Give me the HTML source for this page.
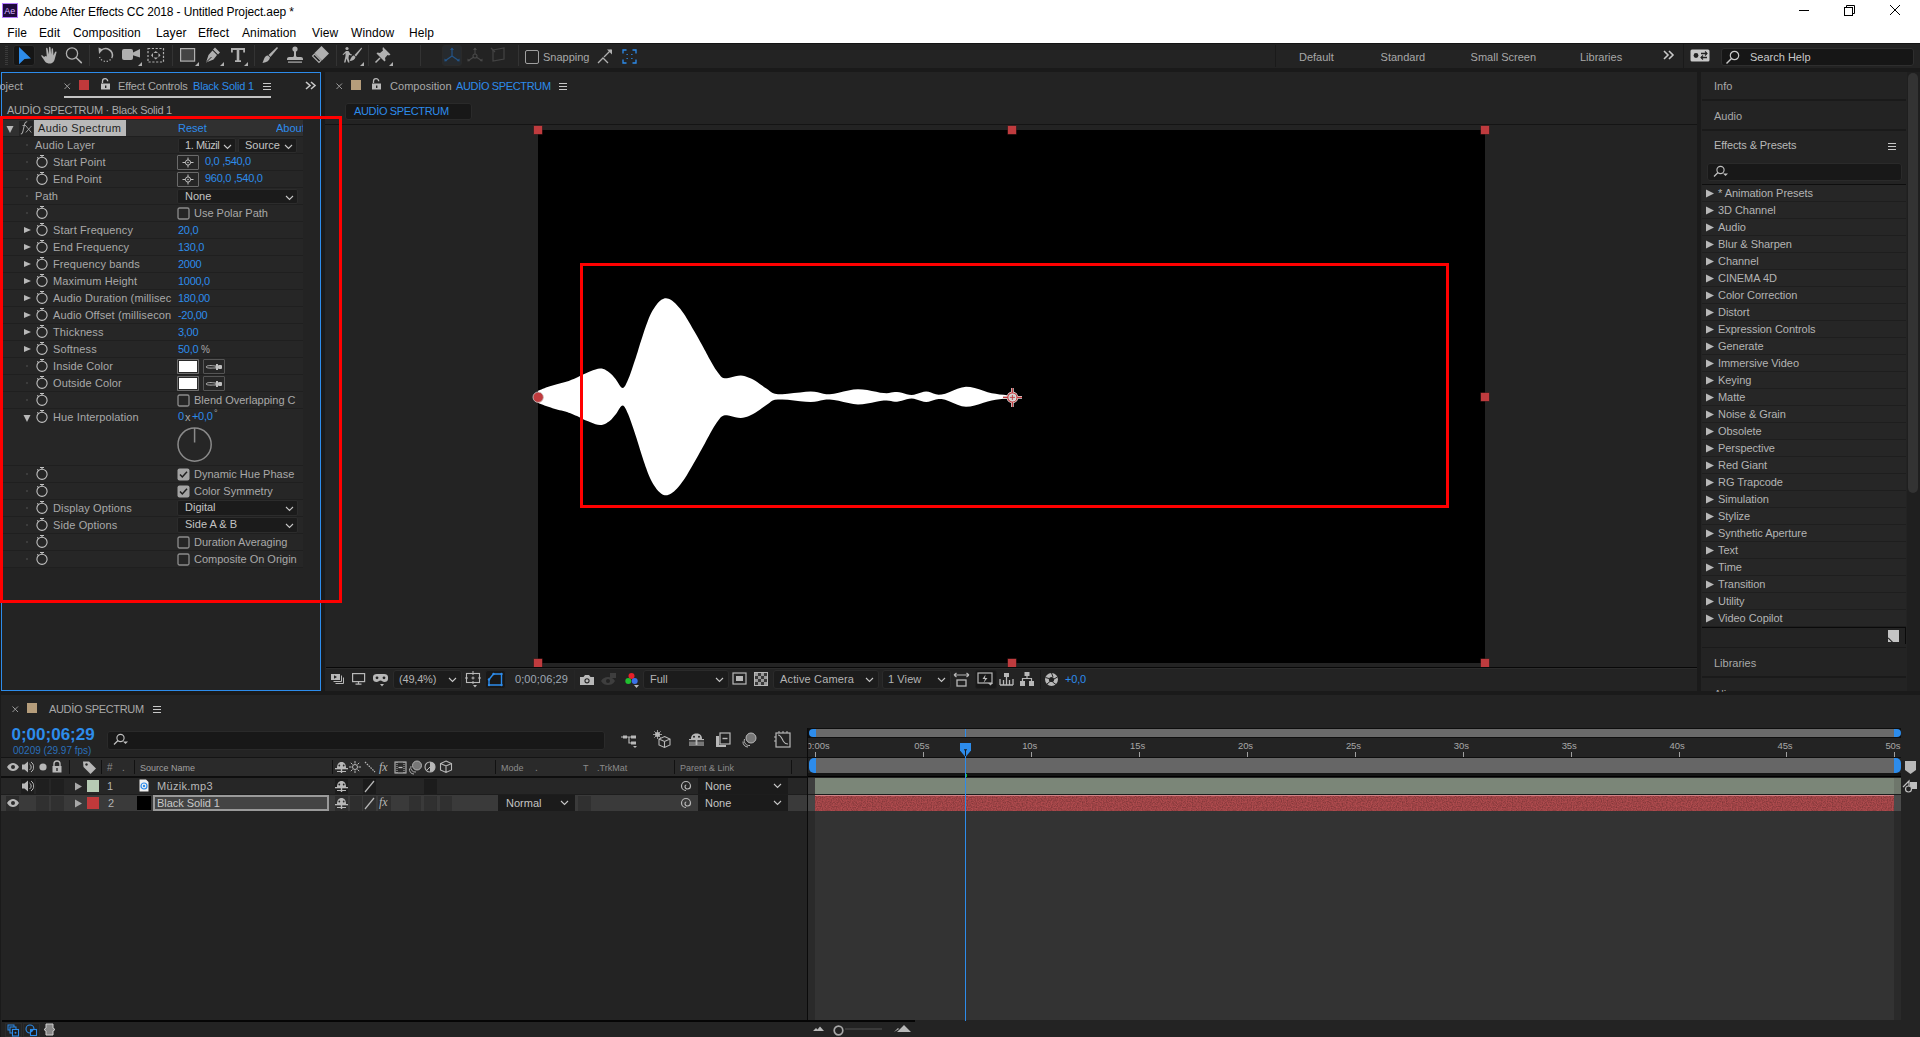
<!DOCTYPE html><html><head><meta charset="utf-8"><style>
*{margin:0;padding:0}
html,body{width:1920px;height:1037px;overflow:hidden;background:#1a1a1a;font-family:"Liberation Sans",sans-serif}
.t{position:absolute;white-space:pre;line-height:1em}
.r{position:absolute;display:block}
</style></head><body><div class="r" style="left:0px;top:0px;width:1920px;height:43px;background:#ffffff;"></div>
<div class="r" style="left:0px;top:43px;width:1920px;height:1px;background:#141414;"></div>
<div class="r" style="left:0px;top:44px;width:1920px;height:24px;background:#232323;"></div>
<div class="r" style="left:2px;top:3px;width:16px;height:15px;box-sizing:border-box;border:1px solid #b47cff;background:#1f0a3d;"></div>
<div class="t" style="left:4.2px;top:6.58px;font-size:9px;color:#d9b0ff;">Ae</div>
<div class="t" style="left:23.4px;top:6.14px;font-size:12px;color:#000000;letter-spacing:-0.12px;">Adobe After Effects CC 2018 - Untitled Project.aep *</div>
<div class="r" style="left:1799px;top:10px;width:10px;height:1px;background:#000;"></div>
<svg class="r" style="left:1843px;top:4px;" width="13" height="13" viewBox="0 0 13 13"><rect x="1.5" y="3.5" width="8" height="8" fill="none" stroke="#000"/><path d="M3.5 3.5V1.5H11.5V9.5H9.5" fill="none" stroke="#000"/></svg>
<svg class="r" style="left:1889px;top:4px;" width="13" height="13" viewBox="0 0 13 13"><path d="M1 1L11 11M11 1L1 11" stroke="#000" stroke-width="1"/></svg>
<div class="t" style="left:7.3px;top:26.54px;font-size:12px;color:#000000;letter-spacing:0.1px;">File</div>
<div class="t" style="left:39px;top:26.54px;font-size:12px;color:#000000;letter-spacing:0.1px;">Edit</div>
<div class="t" style="left:73px;top:26.54px;font-size:12px;color:#000000;letter-spacing:0.1px;">Composition</div>
<div class="t" style="left:156px;top:26.54px;font-size:12px;color:#000000;letter-spacing:0.1px;">Layer</div>
<div class="t" style="left:198px;top:26.54px;font-size:12px;color:#000000;letter-spacing:0.1px;">Effect</div>
<div class="t" style="left:242px;top:26.54px;font-size:12px;color:#000000;letter-spacing:0.1px;">Animation</div>
<div class="t" style="left:312px;top:26.54px;font-size:12px;color:#000000;letter-spacing:0.1px;">View</div>
<div class="t" style="left:351px;top:26.54px;font-size:12px;color:#000000;letter-spacing:0.1px;">Window</div>
<div class="t" style="left:409px;top:26.54px;font-size:12px;color:#000000;letter-spacing:0.1px;">Help</div>
<svg class="r" style="left:5px;top:46px;" width="3" height="20" viewBox="0 0 3 20"><rect x="0" y="0" width="3" height="1" fill="#3a3a3a"/><rect x="0" y="2" width="3" height="1" fill="#3a3a3a"/><rect x="0" y="4" width="3" height="1" fill="#3a3a3a"/><rect x="0" y="6" width="3" height="1" fill="#3a3a3a"/><rect x="0" y="8" width="3" height="1" fill="#3a3a3a"/><rect x="0" y="10" width="3" height="1" fill="#3a3a3a"/><rect x="0" y="12" width="3" height="1" fill="#3a3a3a"/><rect x="0" y="14" width="3" height="1" fill="#3a3a3a"/><rect x="0" y="16" width="3" height="1" fill="#3a3a3a"/><rect x="0" y="18" width="3" height="1" fill="#3a3a3a"/></svg>
<div class="r" style="left:13px;top:45px;width:22px;height:21px;box-sizing:border-box;border:1px solid #2a2a2a;background:#151515;border-radius:3px;"></div>
<svg class="r" style="left:17px;top:45px;" width="16" height="20" viewBox="0 0 16 20"><path d="M2 2L14 13.6L7.5 14L2 19.2Z" fill="#2d8ceb"/></svg>
<svg class="r" style="left:40px;top:46px;" width="18" height="18" viewBox="0 0 18 18"><path d="M4 11C3 9.5 1.5 8.8 1.2 9.6C1 10.3 3.5 13 5 15.5C6 17 8 17.5 10 17.5C13 17.5 14.5 15 15 12L16.5 6.5C16.8 5.5 15.6 5 15 6L13.5 9.5L13 3C13 2 11.7 2 11.6 3L11.2 8.5L10.5 1.5C10.4 0.5 9 0.5 9 1.5L8.8 8.5L7.5 2.5C7.3 1.5 6 1.7 6.1 2.7L6.8 10.5L5.5 10Z" fill="#b0b0b0"/></svg>
<svg class="r" style="left:64px;top:46px;" width="20" height="20" viewBox="0 0 20 20"><circle cx="8" cy="7.5" r="5.6" fill="none" stroke="#b0b0b0" stroke-width="1.3"/><path d="M12 11.5L17.3 16.6" stroke="#b0b0b0" stroke-width="1.6" stroke-linecap="round"/></svg>
<div class="r" style="left:89px;top:45px;width:1px;height:21px;background:#333333;"></div>
<svg class="r" style="left:97px;top:46px;" width="18" height="18" viewBox="0 0 18 18"><path d="M15.2 11A6.8 6.8 0 0 1 2.5 11" fill="none" stroke="#b0b0b0" stroke-width="1.3" stroke-dasharray="1.3 1.7"/><path d="M4.5 4A6.8 6.8 0 0 1 15.2 11" fill="none" stroke="#b0b0b0" stroke-width="1.5"/><path d="M1.5 1.5L6 3.5L2 8Z" fill="#b0b0b0"/></svg>
<svg class="r" style="left:121px;top:48px;" width="20" height="18" viewBox="0 0 20 18"><rect x="1" y="1" width="11" height="11" rx="2" fill="#b0b0b0"/><path d="M11 5L19 1V9.5L11 7Z" fill="#b0b0b0"/></svg>
<svg class="r" style="left:138px;top:62px;" width="4" height="4" viewBox="0 0 4 4"><path d="M4 0V4H0Z" fill="#b0b0b0"/></svg>
<svg class="r" style="left:147px;top:47px;" width="18" height="17" viewBox="0 0 18 17"><rect x="1" y="1.5" width="15.5" height="13.5" fill="none" stroke="#b0b0b0" stroke-width="1.2" stroke-dasharray="2.2 1.6"/><path d="M8.75 4L11 6H6.5Z M8.75 12.5L11 10.5H6.5Z M4 8.25L6 6V10.5Z M13.5 8.25L11.5 6V10.5Z" fill="#b0b0b0"/></svg>
<div class="r" style="left:172px;top:45px;width:1px;height:21px;background:#333333;"></div>
<svg class="r" style="left:179px;top:47px;" width="18" height="16" viewBox="0 0 18 16"><rect x="1.6" y="1.6" width="14" height="12.5" fill="#444444" stroke="#b0b0b0" stroke-width="1.2"/></svg>
<svg class="r" style="left:195px;top:62px;" width="4" height="4" viewBox="0 0 4 4"><path d="M4 0V4H0Z" fill="#b0b0b0"/></svg>
<svg class="r" style="left:204px;top:46px;" width="18" height="18" viewBox="0 0 18 18"><path d="M11 1.5L16 6.5L14 8.5L9 3.5Z M8.5 4.5L13 9L9.5 13.5L2 16.5L4.5 9Z" fill="#b0b0b0"/><path d="M2.5 16L7.5 11" stroke="#232323" stroke-width="1"/></svg>
<svg class="r" style="left:220px;top:62px;" width="4" height="4" viewBox="0 0 4 4"><path d="M4 0V4H0Z" fill="#b0b0b0"/></svg>
<svg class="r" style="left:230px;top:47px;" width="16" height="16" viewBox="0 0 16 16"><path d="M1 1H15V5.5H13.2V3H9.3V13.2H11V15H5V13.2H6.7V3H2.8V5.5H1Z" fill="#b0b0b0"/></svg>
<svg class="r" style="left:244px;top:62px;" width="4" height="4" viewBox="0 0 4 4"><path d="M4 0V4H0Z" fill="#b0b0b0"/></svg>
<div class="r" style="left:254px;top:45px;width:1px;height:21px;background:#333333;"></div>
<svg class="r" style="left:261px;top:46px;" width="18" height="18" viewBox="0 0 18 18"><path d="M16 1L17 2L9.5 11L7.5 9Z" fill="#b0b0b0"/><path d="M7 9.5L9 11.5C8.5 14.5 6 16.5 1.5 17C2.5 15 3 12 4.5 10.5C5.3 9.7 6.3 9.3 7 9.5Z" fill="#b0b0b0"/></svg>
<svg class="r" style="left:286px;top:46px;" width="18" height="18" viewBox="0 0 18 18"><circle cx="9" cy="3" r="2.6" fill="#b0b0b0"/><path d="M8 5H10V9.5C10 10.5 11 11 12 11H15C16 11 17 11.8 17 13V14H1V13C1 11.8 2 11 3 11H6C7 11 8 10.5 8 9.5Z" fill="#b0b0b0"/><rect x="2" y="15.5" width="14" height="1.2" fill="#b0b0b0"/></svg>
<svg class="r" style="left:311px;top:45px;" width="19" height="19" viewBox="0 0 19 19"><path d="M10.5 1L18 8.5L11 15.5L3.5 8Z" fill="#b0b0b0"/><path d="M3.5 9L10 15.5L8 17.5L1.5 11Z" fill="none" stroke="#b0b0b0" stroke-width="1.1"/></svg>
<div class="r" style="left:336px;top:45px;width:1px;height:21px;background:#333333;"></div>
<svg class="r" style="left:341px;top:46px;" width="22" height="18" viewBox="0 0 22 18"><circle cx="6" cy="2.5" r="1.6" fill="#b0b0b0"/><path d="M5 5H7.5L9.5 8L11 8.5L10.5 9.5L8 9L7.5 12L8.5 16.5H7L5.5 12.5L4.5 16.5H3L4.5 10V7L2.5 9L1.5 8.5Z" fill="#b0b0b0"/><path d="M20.5 1.5L21 2.5L15 10.5L13.5 9Z" fill="#b0b0b0"/><path d="M13 9.5L14.5 11C14 13.5 11.5 15 8.5 15C9.5 13.5 10 11.5 11 10.5C11.5 10 12.3 9.5 13 9.5Z" fill="#b0b0b0"/></svg>
<svg class="r" style="left:360px;top:62px;" width="4" height="4" viewBox="0 0 4 4"><path d="M4 0V4H0Z" fill="#b0b0b0"/></svg>
<div class="r" style="left:368px;top:45px;width:1px;height:21px;background:#333333;"></div>
<svg class="r" style="left:374px;top:46px;" width="18" height="18" viewBox="0 0 18 18"><path d="M9 1L16.5 8.5L15 9.5L13.5 9L11 12L11.5 14.5L10.5 15.5L2.5 7.5L3.5 6.5L6 7L9 4.5L8.5 3Z" fill="#b0b0b0"/><path d="M6 12L1.5 16.5" stroke="#b0b0b0" stroke-width="1.6"/></svg>
<svg class="r" style="left:389px;top:62px;" width="4" height="4" viewBox="0 0 4 4"><path d="M4 0V4H0Z" fill="#b0b0b0"/></svg>
<div class="r" style="left:420px;top:45px;width:1px;height:21px;background:#333333;"></div>
<div class="r" style="left:442px;top:45px;width:20px;height:21px;box-sizing:border-box;border:1px solid #2a2a2a;background:#262a2e;border-radius:3px;"></div>
<svg class="r" style="left:443px;top:46px;" width="18" height="18" viewBox="0 0 18 18"><path d="M9 2V10M9 10L2.5 14.5M9 10L15.5 14.5" stroke="#235487" stroke-width="1.2" fill="none"/><path d="M7 4L9 1.5L11 4Z M1.5 12.5L1.5 15.5L4.5 15Z M16.5 12.5L16.5 15.5L13.5 15Z" fill="#235487"/></svg>
<svg class="r" style="left:466px;top:46px;" width="18" height="18" viewBox="0 0 18 18"><path d="M9 2V8.5M7.8 11L2.5 14.5M10.2 11L15.5 14.5" stroke="#484848" stroke-width="1.1" fill="none"/><circle cx="9" cy="10" r="2" fill="none" stroke="#484848" stroke-width="1.1"/><path d="M7 4L9 1.5L11 4Z M1.5 12.5L1.5 15.5L4.5 15Z M16.5 12.5L16.5 15.5L13.5 15Z" fill="#484848"/></svg>
<svg class="r" style="left:490px;top:46px;" width="18" height="18" viewBox="0 0 18 18"><path d="M3 4L14 2V13L3 15Z" stroke="#444" stroke-width="1.2" fill="none"/><path d="M1 2L5 6" stroke="#444" stroke-width="1.2"/></svg>
<div class="r" style="left:518px;top:45px;width:1px;height:21px;background:#333333;"></div>
<div class="r" style="left:525px;top:50px;width:14px;height:14px;box-sizing:border-box;border:1.3px solid #a0a0a0;background:transparent;border-radius:2px;"></div>
<div class="t" style="left:543px;top:51.69px;font-size:11px;color:#a8a8a8;">Snapping</div>
<svg class="r" style="left:597px;top:48px;" width="17" height="16" viewBox="0 0 17 16"><path d="M1 15L6 10L11 15" stroke="#b0b0b0" stroke-width="1.3" fill="none"/><path d="M7 9L14 2" stroke="#b0b0b0" stroke-width="1.3"/><path d="M10 1.5H15V6.5Z" fill="#b0b0b0"/></svg>
<svg class="r" style="left:622px;top:49px;" width="15" height="15" viewBox="0 0 15 15"><path d="M1 4.5V1H4.5M10.5 1H14V4.5M14 10.5V14H10.5M4.5 14H1V10.5" stroke="#2d8ceb" stroke-width="1.3" fill="none"/><path d="M4.5 5.5H5.8M9.2 5.5H10.5M4.5 9.5H5.8M9.2 9.5H10.5" stroke="#2d8ceb" stroke-width="1.1"/></svg>
<div class="r" style="left:1275px;top:45px;width:1px;height:22px;background:#1a1a1a;"></div>
<div class="t" style="left:1299px;top:51.69px;font-size:11px;color:#a8a8a8;">Default</div>
<div class="t" style="left:1380.6px;top:51.69px;font-size:11px;color:#a8a8a8;">Standard</div>
<div class="t" style="left:1470.6px;top:51.69px;font-size:11px;color:#a8a8a8;">Small Screen</div>
<div class="t" style="left:1580px;top:51.69px;font-size:11px;color:#a8a8a8;">Libraries</div>
<svg class="r" style="left:1662px;top:49px;" width="13" height="12" viewBox="0 0 13 12"><path d="M2 2L6 6L2 10M7 2L11 6L7 10" stroke="#c8c8c8" stroke-width="1.6" fill="none"/></svg>
<div class="r" style="left:1683px;top:44px;width:1px;height:24px;background:#1a1a1a;"></div>
<svg class="r" style="left:1690px;top:49px;" width="20" height="13" viewBox="0 0 20 13"><rect x="0.5" y="0.5" width="19" height="12" rx="1.5" fill="#c8c8c8"/><circle cx="6" cy="6.5" r="2.4" fill="#232323"/><path d="M11 4.5H17M11 8.5H17" stroke="#232323" stroke-width="1.3"/><path d="M15 2.5L17 4.5L15 6.5M13 6.5L11 8.5L13 10.5" stroke="#232323" stroke-width="1.1" fill="none"/></svg>
<div class="r" style="left:1721px;top:48px;width:193px;height:18px;box-sizing:border-box;border:1px solid #2e2e2e;background:#161616;border-radius:3px;"></div>
<svg class="r" style="left:1725px;top:50px;" width="16" height="15" viewBox="0 0 16 15"><circle cx="9.5" cy="5.5" r="4.2" fill="none" stroke="#c8c8c8" stroke-width="1.2"/><path d="M6.5 8.5L1.5 13.5" stroke="#c8c8c8" stroke-width="1.4"/></svg>
<div class="t" style="left:1750px;top:52.19px;font-size:11px;color:#c8c8c8;">Search Help</div>
<div class="r" style="left:0px;top:68px;width:1920px;height:4px;background:#1a1a1a;"></div>
<div class="r" style="left:1px;top:73px;width:319px;height:617px;background:#232323;"></div>
<div class="r" style="left:1px;top:72px;width:320px;height:619px;box-sizing:border-box;border:1px solid #2d8ceb;background:transparent;"></div>
<div class="t" style="left:-0.5px;top:80.69px;font-size:11px;color:#a9a9a9;">oject</div>
<svg class="r" style="left:63px;top:82px;" width="9" height="9" viewBox="0 0 9 9"><path d="M1.5 1.5L7 7M7 1.5L1.5 7" stroke="#9a9a9a" stroke-width="1"/></svg>
<div class="r" style="left:79px;top:80px;width:10px;height:10px;background:#c0393b;"></div>
<svg class="r" style="left:100px;top:78px;" width="11" height="12" viewBox="0 0 11 12"><path d="M2.5 5V3.3A2.6 2.6 0 0 1 7.7 3.3" stroke="#c0c0c0" stroke-width="1.3" fill="none"/><rect x="1" y="5.5" width="9" height="6" fill="#c0c0c0"/><rect x="5" y="7.5" width="1.4" height="2.5" fill="#232323"/></svg>
<div class="t" style="left:118px;top:80.69px;font-size:11px;color:#a9a9a9;letter-spacing:-0.15px;">Effect Controls</div>
<div class="t" style="left:193px;top:80.69px;font-size:11px;color:#2d8ceb;letter-spacing:-0.2px;">Black Solid 1</div>
<svg class="r" style="left:262px;top:82px;" width="10" height="9" viewBox="0 0 10 9"><path d="M1 1.5H9M1 4.5H9M1 7.5H9" stroke="#c8c8c8" stroke-width="1.2"/></svg>
<svg class="r" style="left:304px;top:80px;" width="13" height="11" viewBox="0 0 13 11"><path d="M2 2L6 5.5L2 9M7 2L11 5.5L7 9" stroke="#c8c8c8" stroke-width="1.6" fill="none"/></svg>
<div class="r" style="left:64px;top:96px;width:207px;height:2px;background:#c4c4c4;"></div>
<div class="t" style="left:7px;top:105.09px;font-size:11px;color:#a9a9a9;letter-spacing:-0.27px;">AUDİO SPECTRUM · Black Solid 1</div>
<div class="r" style="left:1px;top:120px;width:302px;height:16px;background:#303030;"></div>
<svg class="r" style="left:6px;top:125px;" width="8" height="9" viewBox="0 0 8 9"><path d="M0.5 1H7.5L4 8Z" fill="#b8b8b8"/></svg>
<div class="r" style="left:19px;top:121px;width:14px;height:15px;background:#242424;"></div>
<svg class="r" style="left:19px;top:120px;" width="15" height="16" viewBox="0 0 15 16"><path d="M1.8 14C3 14 3.6 13 4 11L5.6 4C6 2.3 6.8 1.6 8.2 1.8" stroke="#a8a8a8" stroke-width="1.1" fill="none"/><path d="M3.5 5.5H7" stroke="#a8a8a8" stroke-width="0.9"/><path d="M7 6L12.3 12.5M12.5 6L6.8 12.5" stroke="#a8a8a8" stroke-width="0.9"/></svg>
<div class="r" style="left:34px;top:120px;width:92px;height:16px;background:#b9b9b9;"></div>
<div class="t" style="left:38px;top:122.69px;font-size:11px;color:#1e1e1e;letter-spacing:0.35px;">Audio Spectrum</div>
<div class="t" style="left:178px;top:122.69px;font-size:11px;color:#2d8ceb;">Reset</div>
<div class="t" style="left:276px;top:122.69px;font-size:11px;color:#2d8ceb;clip-path:inset(0 2px 0 0);">About</div>
<div class="r" style="left:1px;top:136px;width:302px;height:432px;background:#1f1f1f;"></div>
<div class="r" style="left:1px;top:137px;width:302px;height:16px;background:#262626;"></div>
<div class="r" style="left:1px;top:154px;width:302px;height:16px;background:#262626;"></div>
<div class="r" style="left:1px;top:171px;width:302px;height:16px;background:#262626;"></div>
<div class="r" style="left:1px;top:188px;width:302px;height:16px;background:#262626;"></div>
<div class="r" style="left:1px;top:205px;width:302px;height:16px;background:#262626;"></div>
<div class="r" style="left:1px;top:222px;width:302px;height:16px;background:#262626;"></div>
<div class="r" style="left:1px;top:239px;width:302px;height:16px;background:#262626;"></div>
<div class="r" style="left:1px;top:256px;width:302px;height:16px;background:#262626;"></div>
<div class="r" style="left:1px;top:273px;width:302px;height:16px;background:#262626;"></div>
<div class="r" style="left:1px;top:290px;width:302px;height:16px;background:#262626;"></div>
<div class="r" style="left:1px;top:307px;width:302px;height:16px;background:#262626;"></div>
<div class="r" style="left:1px;top:324px;width:302px;height:16px;background:#262626;"></div>
<div class="r" style="left:1px;top:341px;width:302px;height:16px;background:#262626;"></div>
<div class="r" style="left:1px;top:358px;width:302px;height:16px;background:#262626;"></div>
<div class="r" style="left:1px;top:375px;width:302px;height:16px;background:#262626;"></div>
<div class="r" style="left:1px;top:392px;width:302px;height:16px;background:#262626;"></div>
<div class="r" style="left:1px;top:409px;width:302px;height:16px;background:#262626;"></div>
<div class="r" style="left:1px;top:466px;width:302px;height:16px;background:#262626;"></div>
<div class="r" style="left:1px;top:483px;width:302px;height:16px;background:#262626;"></div>
<div class="r" style="left:1px;top:500px;width:302px;height:16px;background:#262626;"></div>
<div class="r" style="left:1px;top:517px;width:302px;height:16px;background:#262626;"></div>
<div class="r" style="left:1px;top:534px;width:302px;height:16px;background:#262626;"></div>
<div class="r" style="left:1px;top:551px;width:302px;height:16px;background:#262626;"></div>
<div class="r" style="left:1px;top:425px;width:302px;height:40px;background:#262626;"></div>
<div class="r" style="left:26px;top:144px;width:2px;height:2px;background:#3c3c3c;"></div>
<div class="t" style="left:35px;top:140.09px;font-size:11px;color:#a9a9a9;letter-spacing:0.12px;">Audio Layer</div>
<div class="r" style="left:26px;top:161px;width:2px;height:2px;background:#3c3c3c;"></div>
<svg class="r" style="left:35.1px;top:153.2px;" width="14" height="16" viewBox="0 0 14 16"><circle cx="7" cy="9.3" r="5.1" fill="none" stroke="#c0c0c0" stroke-width="1.1"/><path d="M5 2.5H9M7 2.5V4.2M2.3 4.3L3.6 5.6" stroke="#c0c0c0" stroke-width="1.1"/></svg>
<div class="t" style="left:53px;top:157.09px;font-size:11px;color:#a9a9a9;letter-spacing:0.12px;">Start Point</div>
<div class="r" style="left:26px;top:178px;width:2px;height:2px;background:#3c3c3c;"></div>
<svg class="r" style="left:35.1px;top:170.2px;" width="14" height="16" viewBox="0 0 14 16"><circle cx="7" cy="9.3" r="5.1" fill="none" stroke="#c0c0c0" stroke-width="1.1"/><path d="M5 2.5H9M7 2.5V4.2M2.3 4.3L3.6 5.6" stroke="#c0c0c0" stroke-width="1.1"/></svg>
<div class="t" style="left:53px;top:174.09px;font-size:11px;color:#a9a9a9;letter-spacing:0.12px;">End Point</div>
<div class="r" style="left:26px;top:195px;width:2px;height:2px;background:#3c3c3c;"></div>
<div class="t" style="left:35px;top:191.09px;font-size:11px;color:#a9a9a9;letter-spacing:0.12px;">Path</div>
<div class="r" style="left:26px;top:212px;width:2px;height:2px;background:#3c3c3c;"></div>
<svg class="r" style="left:35.1px;top:204.2px;" width="14" height="16" viewBox="0 0 14 16"><circle cx="7" cy="9.3" r="5.1" fill="none" stroke="#c0c0c0" stroke-width="1.1"/><path d="M5 2.5H9M7 2.5V4.2M2.3 4.3L3.6 5.6" stroke="#c0c0c0" stroke-width="1.1"/></svg>
<svg class="r" style="left:23px;top:226px;" width="9" height="8" viewBox="0 0 9 8"><path d="M1 1L8 4L1 7Z" fill="#b8b8b8"/></svg>
<svg class="r" style="left:35.1px;top:221.2px;" width="14" height="16" viewBox="0 0 14 16"><circle cx="7" cy="9.3" r="5.1" fill="none" stroke="#c0c0c0" stroke-width="1.1"/><path d="M5 2.5H9M7 2.5V4.2M2.3 4.3L3.6 5.6" stroke="#c0c0c0" stroke-width="1.1"/></svg>
<div class="t" style="left:53px;top:225.09px;font-size:11px;color:#a9a9a9;letter-spacing:0.12px;">Start Frequency</div>
<svg class="r" style="left:23px;top:243px;" width="9" height="8" viewBox="0 0 9 8"><path d="M1 1L8 4L1 7Z" fill="#b8b8b8"/></svg>
<svg class="r" style="left:35.1px;top:238.2px;" width="14" height="16" viewBox="0 0 14 16"><circle cx="7" cy="9.3" r="5.1" fill="none" stroke="#c0c0c0" stroke-width="1.1"/><path d="M5 2.5H9M7 2.5V4.2M2.3 4.3L3.6 5.6" stroke="#c0c0c0" stroke-width="1.1"/></svg>
<div class="t" style="left:53px;top:242.09px;font-size:11px;color:#a9a9a9;letter-spacing:0.12px;">End Frequency</div>
<svg class="r" style="left:23px;top:260px;" width="9" height="8" viewBox="0 0 9 8"><path d="M1 1L8 4L1 7Z" fill="#b8b8b8"/></svg>
<svg class="r" style="left:35.1px;top:255.2px;" width="14" height="16" viewBox="0 0 14 16"><circle cx="7" cy="9.3" r="5.1" fill="none" stroke="#c0c0c0" stroke-width="1.1"/><path d="M5 2.5H9M7 2.5V4.2M2.3 4.3L3.6 5.6" stroke="#c0c0c0" stroke-width="1.1"/></svg>
<div class="t" style="left:53px;top:259.09px;font-size:11px;color:#a9a9a9;letter-spacing:0.12px;">Frequency bands</div>
<svg class="r" style="left:23px;top:277px;" width="9" height="8" viewBox="0 0 9 8"><path d="M1 1L8 4L1 7Z" fill="#b8b8b8"/></svg>
<svg class="r" style="left:35.1px;top:272.2px;" width="14" height="16" viewBox="0 0 14 16"><circle cx="7" cy="9.3" r="5.1" fill="none" stroke="#c0c0c0" stroke-width="1.1"/><path d="M5 2.5H9M7 2.5V4.2M2.3 4.3L3.6 5.6" stroke="#c0c0c0" stroke-width="1.1"/></svg>
<div class="t" style="left:53px;top:276.09px;font-size:11px;color:#a9a9a9;letter-spacing:0.12px;">Maximum Height</div>
<svg class="r" style="left:23px;top:294px;" width="9" height="8" viewBox="0 0 9 8"><path d="M1 1L8 4L1 7Z" fill="#b8b8b8"/></svg>
<svg class="r" style="left:35.1px;top:289.2px;" width="14" height="16" viewBox="0 0 14 16"><circle cx="7" cy="9.3" r="5.1" fill="none" stroke="#c0c0c0" stroke-width="1.1"/><path d="M5 2.5H9M7 2.5V4.2M2.3 4.3L3.6 5.6" stroke="#c0c0c0" stroke-width="1.1"/></svg>
<div class="t" style="left:53px;top:293.09px;font-size:11px;color:#a9a9a9;letter-spacing:0.12px;">Audio Duration (millisec</div>
<svg class="r" style="left:23px;top:311px;" width="9" height="8" viewBox="0 0 9 8"><path d="M1 1L8 4L1 7Z" fill="#b8b8b8"/></svg>
<svg class="r" style="left:35.1px;top:306.2px;" width="14" height="16" viewBox="0 0 14 16"><circle cx="7" cy="9.3" r="5.1" fill="none" stroke="#c0c0c0" stroke-width="1.1"/><path d="M5 2.5H9M7 2.5V4.2M2.3 4.3L3.6 5.6" stroke="#c0c0c0" stroke-width="1.1"/></svg>
<div class="t" style="left:53px;top:310.09px;font-size:11px;color:#a9a9a9;letter-spacing:0.12px;">Audio Offset (millisecon</div>
<svg class="r" style="left:23px;top:328px;" width="9" height="8" viewBox="0 0 9 8"><path d="M1 1L8 4L1 7Z" fill="#b8b8b8"/></svg>
<svg class="r" style="left:35.1px;top:323.2px;" width="14" height="16" viewBox="0 0 14 16"><circle cx="7" cy="9.3" r="5.1" fill="none" stroke="#c0c0c0" stroke-width="1.1"/><path d="M5 2.5H9M7 2.5V4.2M2.3 4.3L3.6 5.6" stroke="#c0c0c0" stroke-width="1.1"/></svg>
<div class="t" style="left:53px;top:327.09px;font-size:11px;color:#a9a9a9;letter-spacing:0.12px;">Thickness</div>
<svg class="r" style="left:23px;top:345px;" width="9" height="8" viewBox="0 0 9 8"><path d="M1 1L8 4L1 7Z" fill="#b8b8b8"/></svg>
<svg class="r" style="left:35.1px;top:340.2px;" width="14" height="16" viewBox="0 0 14 16"><circle cx="7" cy="9.3" r="5.1" fill="none" stroke="#c0c0c0" stroke-width="1.1"/><path d="M5 2.5H9M7 2.5V4.2M2.3 4.3L3.6 5.6" stroke="#c0c0c0" stroke-width="1.1"/></svg>
<div class="t" style="left:53px;top:344.09px;font-size:11px;color:#a9a9a9;letter-spacing:0.12px;">Softness</div>
<div class="r" style="left:26px;top:365px;width:2px;height:2px;background:#3c3c3c;"></div>
<svg class="r" style="left:35.1px;top:357.2px;" width="14" height="16" viewBox="0 0 14 16"><circle cx="7" cy="9.3" r="5.1" fill="none" stroke="#c0c0c0" stroke-width="1.1"/><path d="M5 2.5H9M7 2.5V4.2M2.3 4.3L3.6 5.6" stroke="#c0c0c0" stroke-width="1.1"/></svg>
<div class="t" style="left:53px;top:361.09px;font-size:11px;color:#a9a9a9;letter-spacing:0.12px;">Inside Color</div>
<div class="r" style="left:26px;top:382px;width:2px;height:2px;background:#3c3c3c;"></div>
<svg class="r" style="left:35.1px;top:374.2px;" width="14" height="16" viewBox="0 0 14 16"><circle cx="7" cy="9.3" r="5.1" fill="none" stroke="#c0c0c0" stroke-width="1.1"/><path d="M5 2.5H9M7 2.5V4.2M2.3 4.3L3.6 5.6" stroke="#c0c0c0" stroke-width="1.1"/></svg>
<div class="t" style="left:53px;top:378.09px;font-size:11px;color:#a9a9a9;letter-spacing:0.12px;">Outside Color</div>
<div class="r" style="left:26px;top:399px;width:2px;height:2px;background:#3c3c3c;"></div>
<svg class="r" style="left:35.1px;top:391.2px;" width="14" height="16" viewBox="0 0 14 16"><circle cx="7" cy="9.3" r="5.1" fill="none" stroke="#c0c0c0" stroke-width="1.1"/><path d="M5 2.5H9M7 2.5V4.2M2.3 4.3L3.6 5.6" stroke="#c0c0c0" stroke-width="1.1"/></svg>
<svg class="r" style="left:23px;top:414px;" width="8" height="9" viewBox="0 0 8 9"><path d="M0.5 1H7.5L4 8Z" fill="#b8b8b8"/></svg>
<svg class="r" style="left:35.1px;top:408.2px;" width="14" height="16" viewBox="0 0 14 16"><circle cx="7" cy="9.3" r="5.1" fill="none" stroke="#c0c0c0" stroke-width="1.1"/><path d="M5 2.5H9M7 2.5V4.2M2.3 4.3L3.6 5.6" stroke="#c0c0c0" stroke-width="1.1"/></svg>
<div class="t" style="left:53px;top:412.09px;font-size:11px;color:#a9a9a9;letter-spacing:0.12px;">Hue Interpolation</div>
<div class="r" style="left:26px;top:473px;width:2px;height:2px;background:#3c3c3c;"></div>
<svg class="r" style="left:35.1px;top:465.2px;" width="14" height="16" viewBox="0 0 14 16"><circle cx="7" cy="9.3" r="5.1" fill="none" stroke="#c0c0c0" stroke-width="1.1"/><path d="M5 2.5H9M7 2.5V4.2M2.3 4.3L3.6 5.6" stroke="#c0c0c0" stroke-width="1.1"/></svg>
<div class="r" style="left:26px;top:490px;width:2px;height:2px;background:#3c3c3c;"></div>
<svg class="r" style="left:35.1px;top:482.2px;" width="14" height="16" viewBox="0 0 14 16"><circle cx="7" cy="9.3" r="5.1" fill="none" stroke="#c0c0c0" stroke-width="1.1"/><path d="M5 2.5H9M7 2.5V4.2M2.3 4.3L3.6 5.6" stroke="#c0c0c0" stroke-width="1.1"/></svg>
<div class="r" style="left:26px;top:507px;width:2px;height:2px;background:#3c3c3c;"></div>
<svg class="r" style="left:35.1px;top:499.2px;" width="14" height="16" viewBox="0 0 14 16"><circle cx="7" cy="9.3" r="5.1" fill="none" stroke="#c0c0c0" stroke-width="1.1"/><path d="M5 2.5H9M7 2.5V4.2M2.3 4.3L3.6 5.6" stroke="#c0c0c0" stroke-width="1.1"/></svg>
<div class="t" style="left:53px;top:503.09px;font-size:11px;color:#a9a9a9;letter-spacing:0.12px;">Display Options</div>
<div class="r" style="left:26px;top:524px;width:2px;height:2px;background:#3c3c3c;"></div>
<svg class="r" style="left:35.1px;top:516.2px;" width="14" height="16" viewBox="0 0 14 16"><circle cx="7" cy="9.3" r="5.1" fill="none" stroke="#c0c0c0" stroke-width="1.1"/><path d="M5 2.5H9M7 2.5V4.2M2.3 4.3L3.6 5.6" stroke="#c0c0c0" stroke-width="1.1"/></svg>
<div class="t" style="left:53px;top:520.09px;font-size:11px;color:#a9a9a9;letter-spacing:0.12px;">Side Options</div>
<div class="r" style="left:26px;top:541px;width:2px;height:2px;background:#3c3c3c;"></div>
<svg class="r" style="left:35.1px;top:533.2px;" width="14" height="16" viewBox="0 0 14 16"><circle cx="7" cy="9.3" r="5.1" fill="none" stroke="#c0c0c0" stroke-width="1.1"/><path d="M5 2.5H9M7 2.5V4.2M2.3 4.3L3.6 5.6" stroke="#c0c0c0" stroke-width="1.1"/></svg>
<div class="r" style="left:26px;top:558px;width:2px;height:2px;background:#3c3c3c;"></div>
<svg class="r" style="left:35.1px;top:550.2px;" width="14" height="16" viewBox="0 0 14 16"><circle cx="7" cy="9.3" r="5.1" fill="none" stroke="#c0c0c0" stroke-width="1.1"/><path d="M5 2.5H9M7 2.5V4.2M2.3 4.3L3.6 5.6" stroke="#c0c0c0" stroke-width="1.1"/></svg>
<div class="r" style="left:178px;top:138px;width:58px;height:15px;box-sizing:border-box;border:1px solid #2c2c2c;background:#1b1b1b;border-radius:2px;"></div>
<div class="t" style="left:185px;top:140.19px;font-size:11px;color:#c4c4c4;letter-spacing:-0.45px;">1. Müzil</div>
<svg class="r" style="left:223px;top:144px;" width="9" height="6" viewBox="0 0 9 6"><path d="M1 1L4.5 4.5L8 1" stroke="#c8c8c8" stroke-width="1.1" fill="none"/></svg>
<div class="r" style="left:238px;top:138px;width:59px;height:15px;box-sizing:border-box;border:1px solid #2c2c2c;background:#1b1b1b;border-radius:2px;"></div>
<div class="t" style="left:245px;top:140.19px;font-size:11px;color:#c4c4c4;">Source</div>
<svg class="r" style="left:284px;top:144px;" width="9" height="6" viewBox="0 0 9 6"><path d="M1 1L4.5 4.5L8 1" stroke="#c8c8c8" stroke-width="1.1" fill="none"/></svg>
<div class="r" style="left:177px;top:155px;width:22px;height:15px;box-sizing:border-box;border:1px solid #6a6a6a;background:transparent;border-radius:1px;"></div>
<svg class="r" style="left:181px;top:157px;" width="14" height="11" viewBox="0 0 14 11"><circle cx="7" cy="5.5" r="2.6" fill="none" stroke="#c0c0c0" stroke-width="1"/><path d="M7 0.5V3M7 8V10.5M1.5 5.5H4.5M9.5 5.5H12.5" stroke="#c0c0c0" stroke-width="1"/><circle cx="7" cy="5.5" r="0.8" fill="#c0c0c0"/></svg>
<div class="t" style="left:205px;top:156.19px;font-size:11px;color:#2d8ceb;letter-spacing:-0.3px;">0,0 ,540,0</div>
<div class="r" style="left:177px;top:172px;width:22px;height:15px;box-sizing:border-box;border:1px solid #6a6a6a;background:transparent;border-radius:1px;"></div>
<svg class="r" style="left:181px;top:174px;" width="14" height="11" viewBox="0 0 14 11"><circle cx="7" cy="5.5" r="2.6" fill="none" stroke="#c0c0c0" stroke-width="1"/><path d="M7 0.5V3M7 8V10.5M1.5 5.5H4.5M9.5 5.5H12.5" stroke="#c0c0c0" stroke-width="1"/><circle cx="7" cy="5.5" r="0.8" fill="#c0c0c0"/></svg>
<div class="t" style="left:205px;top:173.19px;font-size:11px;color:#2d8ceb;letter-spacing:-0.3px;">960,0 ,540,0</div>
<div class="r" style="left:177px;top:189px;width:121px;height:15px;box-sizing:border-box;border:1px solid #2c2c2c;background:#1b1b1b;border-radius:2px;"></div>
<div class="t" style="left:185px;top:191.19px;font-size:11px;color:#c4c4c4;">None</div>
<svg class="r" style="left:285px;top:195px;" width="9" height="6" viewBox="0 0 9 6"><path d="M1 1L4.5 4.5L8 1" stroke="#c8c8c8" stroke-width="1.1" fill="none"/></svg>
<svg class="r" style="left:177px;top:207px;" width="13" height="13" viewBox="0 0 13 13"><rect x="1" y="1" width="11" height="11" rx="1.5" fill="none" stroke="#8c8c8c" stroke-width="1.3"/></svg>
<div class="t" style="left:194px;top:208.49px;font-size:11px;color:#a9a9a9;">Use Polar Path</div>
<div class="t" style="left:178px;top:224.69px;font-size:11px;color:#2d8ceb;letter-spacing:-0.3px;">20,0</div>
<div class="t" style="left:178px;top:241.69px;font-size:11px;color:#2d8ceb;letter-spacing:-0.3px;">130,0</div>
<div class="t" style="left:178px;top:258.69px;font-size:11px;color:#2d8ceb;letter-spacing:-0.3px;">2000</div>
<div class="t" style="left:178px;top:275.69px;font-size:11px;color:#2d8ceb;letter-spacing:-0.3px;">1000,0</div>
<div class="t" style="left:178px;top:292.69px;font-size:11px;color:#2d8ceb;letter-spacing:-0.3px;">180,00</div>
<div class="t" style="left:178px;top:309.69px;font-size:11px;color:#2d8ceb;letter-spacing:-0.3px;">-20,00</div>
<div class="t" style="left:178px;top:326.69px;font-size:11px;color:#2d8ceb;letter-spacing:-0.3px;">3,00</div>
<div class="t" style="left:178px;top:343.69px;font-size:11px;color:#2d8ceb;letter-spacing:-0.3px;">50,0</div>
<div class="t" style="left:201px;top:344.54px;font-size:10px;color:#a9a9a9;">%</div>
<div class="r" style="left:177px;top:359px;width:22px;height:15px;box-sizing:border-box;border:1px solid #6e6e6e;background:#ffffff;border-radius:1px;box-shadow:inset 0 0 0 1px #2a2a2a;"></div>
<div class="r" style="left:203px;top:359px;width:22px;height:15px;box-sizing:border-box;border:1px solid #555555;background:transparent;border-radius:1px;"></div>
<svg class="r" style="left:204px;top:361px;" width="20" height="11" viewBox="0 0 20 11"><path d="M2 6C3 4 8 4.5 11 5L12 5V7L11 7C8 7 3 7.5 2 6Z" fill="none" stroke="#c0c0c0" stroke-width="0.9"/><rect x="12" y="3" width="2" height="6" fill="#c0c0c0"/><rect x="14" y="4" width="4" height="4" rx="1" fill="#c0c0c0"/></svg>
<div class="r" style="left:177px;top:376px;width:22px;height:15px;box-sizing:border-box;border:1px solid #6e6e6e;background:#ffffff;border-radius:1px;box-shadow:inset 0 0 0 1px #2a2a2a;"></div>
<div class="r" style="left:203px;top:376px;width:22px;height:15px;box-sizing:border-box;border:1px solid #555555;background:transparent;border-radius:1px;"></div>
<svg class="r" style="left:204px;top:378px;" width="20" height="11" viewBox="0 0 20 11"><path d="M2 6C3 4 8 4.5 11 5L12 5V7L11 7C8 7 3 7.5 2 6Z" fill="none" stroke="#c0c0c0" stroke-width="0.9"/><rect x="12" y="3" width="2" height="6" fill="#c0c0c0"/><rect x="14" y="4" width="4" height="4" rx="1" fill="#c0c0c0"/></svg>
<svg class="r" style="left:177px;top:394px;" width="13" height="13" viewBox="0 0 13 13"><rect x="1" y="1" width="11" height="11" rx="1.5" fill="none" stroke="#8c8c8c" stroke-width="1.3"/></svg>
<div class="t" style="left:194px;top:395.49px;font-size:11px;color:#a9a9a9;">Blend Overlapping C</div>
<div class="t" style="left:178px;top:410.69px;font-size:11px;color:#2d8ceb;">0</div>
<div class="t" style="left:185px;top:411.69px;font-size:11px;color:#a9a9a9;">x</div>
<div class="t" style="left:192px;top:410.69px;font-size:11px;color:#2d8ceb;letter-spacing:-0.3px;">+0,0</div>
<div class="t" style="left:214px;top:409.38px;font-size:9px;color:#a9a9a9;">°</div>
<svg class="r" style="left:176px;top:426px;" width="38" height="38" viewBox="0 0 38 38"><circle cx="18.6" cy="18.6" r="16.6" fill="none" stroke="#8a8a8a" stroke-width="1.5"/><path d="M18.6 2V16.5" stroke="#8a8a8a" stroke-width="1.5"/></svg>
<svg class="r" style="left:177px;top:468px;" width="13" height="13" viewBox="0 0 13 13"><rect x="0.5" y="0.5" width="12" height="12" rx="2" fill="#a3a3a3"/><path d="M3 6.5L5.3 9L10 3.8" stroke="#1e1e1e" stroke-width="1.5" fill="none"/></svg>
<div class="t" style="left:194px;top:469.49px;font-size:11px;color:#a9a9a9;">Dynamic Hue Phase</div>
<svg class="r" style="left:177px;top:485px;" width="13" height="13" viewBox="0 0 13 13"><rect x="0.5" y="0.5" width="12" height="12" rx="2" fill="#a3a3a3"/><path d="M3 6.5L5.3 9L10 3.8" stroke="#1e1e1e" stroke-width="1.5" fill="none"/></svg>
<div class="t" style="left:194px;top:486.49px;font-size:11px;color:#a9a9a9;">Color Symmetry</div>
<div class="r" style="left:177px;top:500px;width:121px;height:16px;box-sizing:border-box;border:1px solid #2c2c2c;background:#1b1b1b;border-radius:2px;"></div>
<div class="t" style="left:185px;top:502.19px;font-size:11px;color:#c4c4c4;">Digital</div>
<svg class="r" style="left:285px;top:506px;" width="9" height="6" viewBox="0 0 9 6"><path d="M1 1L4.5 4.5L8 1" stroke="#c8c8c8" stroke-width="1.1" fill="none"/></svg>
<div class="r" style="left:177px;top:517px;width:121px;height:16px;box-sizing:border-box;border:1px solid #2c2c2c;background:#1b1b1b;border-radius:2px;"></div>
<div class="t" style="left:185px;top:519.19px;font-size:11px;color:#c4c4c4;">Side A &amp; B</div>
<svg class="r" style="left:285px;top:523px;" width="9" height="6" viewBox="0 0 9 6"><path d="M1 1L4.5 4.5L8 1" stroke="#c8c8c8" stroke-width="1.1" fill="none"/></svg>
<svg class="r" style="left:177px;top:536px;" width="13" height="13" viewBox="0 0 13 13"><rect x="1" y="1" width="11" height="11" rx="1.5" fill="none" stroke="#8c8c8c" stroke-width="1.3"/></svg>
<div class="t" style="left:194px;top:537.49px;font-size:11px;color:#a9a9a9;">Duration Averaging</div>
<svg class="r" style="left:177px;top:553px;" width="13" height="13" viewBox="0 0 13 13"><rect x="1" y="1" width="11" height="11" rx="1.5" fill="none" stroke="#8c8c8c" stroke-width="1.3"/></svg>
<div class="t" style="left:194px;top:554.49px;font-size:11px;color:#a9a9a9;">Composite On Origin</div>
<div class="r" style="left:325px;top:72px;width:1372px;height:619px;background:#232323;"></div>
<svg class="r" style="left:335px;top:82px;" width="9" height="9" viewBox="0 0 9 9"><path d="M1.5 1.5L7 7M7 1.5L1.5 7" stroke="#9a9a9a" stroke-width="1"/></svg>
<div class="r" style="left:351px;top:80px;width:10px;height:10px;background:#b59d7b;"></div>
<svg class="r" style="left:371px;top:78px;" width="11" height="12" viewBox="0 0 11 12"><path d="M2.5 5V3.3A2.6 2.6 0 0 1 7.7 3.3" stroke="#b8b8b8" stroke-width="1.3" fill="none"/><rect x="1" y="5.5" width="9" height="6" fill="#b8b8b8"/><rect x="5" y="7.5" width="1.4" height="2.5" fill="#232323"/></svg>
<div class="t" style="left:390px;top:80.69px;font-size:11px;color:#a9a9a9;letter-spacing:0.05px;">Composition</div>
<div class="t" style="left:456px;top:80.69px;font-size:11px;color:#2d8ceb;letter-spacing:-0.35px;">AUDİO SPECTRUM</div>
<svg class="r" style="left:558px;top:82px;" width="10" height="9" viewBox="0 0 10 9"><path d="M1 1.5H9M1 4.5H9M1 7.5H9" stroke="#c8c8c8" stroke-width="1.2"/></svg>
<div class="r" style="left:345px;top:103px;width:127px;height:17px;box-sizing:border-box;border:1px solid #2a2a2a;background:#181818;border-radius:3px;"></div>
<div class="t" style="left:354px;top:105.99px;font-size:11px;color:#2d8ceb;letter-spacing:-0.35px;">AUDİO SPECTRUM</div>
<div class="r" style="left:325px;top:124px;width:1372px;height:1px;background:#141414;"></div>
<div class="r" style="left:538px;top:130px;width:947px;height:533px;background:#000000;"></div>
<svg class="r" style="left:530px;top:290px;" width="500" height="220" viewBox="0 0 500 220"><path d="M8.00 100.80 L8.85 100.45 L10.00 99.97 L11.38 99.40 L12.89 98.79 L14.46 98.17 L16.00 97.60 L17.54 97.06 L19.15 96.52 L20.81 95.98 L22.52 95.44 L24.25 94.92 L26.00 94.40 L27.79 93.91 L29.63 93.45 L31.50 93.00 L33.37 92.54 L35.21 92.04 L37.00 91.50 L38.74 90.90 L40.44 90.26 L42.12 89.59 L43.78 88.90 L45.40 88.20 L47.00 87.50 L48.50 86.81 L49.89 86.10 L51.25 85.39 L52.67 84.67 L54.22 83.94 L56.00 83.20 L58.10 82.34 L60.48 81.35 L63.00 80.35 L65.52 79.46 L67.90 78.80 L70.00 78.50 L71.82 78.59 L73.46 78.99 L74.96 79.62 L76.36 80.42 L77.70 81.30 L79.00 82.20 L80.24 83.14 L81.37 84.19 L82.43 85.32 L83.47 86.53 L84.51 87.79 L85.60 89.10 L86.75 90.69 L87.92 92.61 L89.10 94.60 L90.27 96.36 L91.41 97.62 L92.50 98.10 L93.51 97.77 L94.46 96.85 L95.37 95.43 L96.29 93.59 L97.25 91.42 L98.30 89.00 L99.47 86.13 L100.73 82.70 L102.03 78.94 L103.33 75.07 L104.57 71.32 L105.70 67.90 L106.70 64.82 L107.62 61.89 L108.48 59.08 L109.31 56.33 L110.14 53.62 L111.00 50.90 L111.88 48.15 L112.77 45.40 L113.65 42.68 L114.53 40.02 L115.42 37.45 L116.30 35.00 L117.16 32.67 L117.99 30.45 L118.82 28.31 L119.68 26.25 L120.60 24.25 L121.60 22.30 L122.72 20.34 L123.93 18.38 L125.19 16.48 L126.49 14.70 L127.77 13.12 L129.00 11.80 L130.18 10.73 L131.33 9.84 L132.46 9.15 L133.61 8.66 L134.78 8.37 L136.00 8.30 L137.26 8.44 L138.54 8.79 L139.84 9.34 L141.19 10.09 L142.57 11.05 L144.00 12.20 L145.48 13.56 L147.02 15.13 L148.59 16.90 L150.20 18.86 L151.84 21.00 L153.50 23.30 L155.21 25.86 L156.98 28.71 L158.78 31.74 L160.57 34.84 L162.33 37.90 L164.00 40.80 L165.61 43.59 L167.19 46.36 L168.72 49.08 L170.20 51.74 L171.63 54.32 L173.00 56.80 L174.27 59.15 L175.46 61.37 L176.58 63.52 L177.69 65.61 L178.82 67.70 L180.00 69.80 L181.25 71.99 L182.54 74.24 L183.84 76.49 L185.15 78.63 L186.44 80.60 L187.70 82.30 L188.82 83.78 L189.79 85.10 L190.74 86.25 L191.80 87.19 L193.11 87.88 L194.80 88.30 L196.98 88.28 L199.58 87.80 L202.42 87.07 L205.33 86.33 L208.15 85.76 L210.70 85.60 L212.96 85.82 L215.06 86.26 L217.06 86.88 L219.03 87.66 L221.02 88.57 L223.10 89.60 L225.28 90.84 L227.53 92.32 L229.80 93.94 L232.06 95.59 L234.27 97.15 L236.40 98.50 L238.19 99.73 L239.61 100.94 L240.99 102.07 L242.63 103.03 L244.87 103.77 L248.00 104.20 L252.39 104.19 L257.84 103.76 L263.88 103.09 L270.03 102.39 L275.79 101.83 L280.70 101.60 L284.57 101.82 L287.74 102.36 L290.53 103.05 L293.26 103.70 L296.25 104.15 L299.80 104.20 L304.00 103.70 L308.62 102.77 L313.49 101.62 L318.45 100.49 L323.34 99.61 L328.00 99.20 L332.57 99.39 L337.21 100.03 L341.78 100.91 L346.14 101.85 L350.16 102.64 L353.70 103.10 L356.62 103.15 L359.00 102.92 L361.04 102.55 L362.93 102.17 L364.85 101.91 L367.00 101.90 L369.36 102.24 L371.77 102.86 L374.22 103.59 L376.69 104.29 L379.15 104.81 L381.60 105.00 L384.02 104.74 L386.43 104.11 L388.84 103.31 L391.27 102.50 L393.71 101.87 L396.20 101.60 L398.63 101.85 L400.97 102.53 L403.34 103.38 L405.85 104.16 L408.60 104.65 L411.70 104.60 L415.22 103.76 L419.10 102.27 L423.21 100.49 L427.47 98.75 L431.77 97.40 L436.00 96.80 L440.26 97.09 L444.66 98.03 L449.10 99.36 L453.48 100.84 L457.71 102.20 L461.70 103.20 L465.63 103.86 L469.62 104.39 L473.46 104.80 L476.94 105.13 L479.85 105.39 L482.00 105.60 L482.00 108.00 L479.85 108.21 L476.94 108.47 L473.46 108.80 L469.62 109.21 L465.63 109.74 L461.70 110.40 L457.71 111.40 L453.48 112.76 L449.10 114.24 L444.66 115.57 L440.26 116.51 L436.00 116.80 L431.77 116.20 L427.47 114.85 L423.21 113.11 L419.10 111.33 L415.22 109.84 L411.70 109.00 L408.60 108.95 L405.85 109.44 L403.34 110.23 L400.97 111.07 L398.63 111.75 L396.20 112.00 L393.71 111.73 L391.27 111.10 L388.84 110.29 L386.43 109.49 L384.02 108.86 L381.60 108.60 L379.15 108.79 L376.69 109.31 L374.22 110.01 L371.77 110.74 L369.36 111.36 L367.00 111.70 L364.85 111.69 L362.93 111.43 L361.04 111.05 L359.00 110.68 L356.62 110.45 L353.70 110.50 L350.16 110.96 L346.14 111.75 L341.78 112.69 L337.21 113.57 L332.57 114.21 L328.00 114.40 L323.34 113.99 L318.45 113.11 L313.49 111.98 L308.62 110.83 L304.00 109.90 L299.80 109.40 L296.25 109.45 L293.26 109.90 L290.53 110.55 L287.74 111.24 L284.57 111.78 L280.70 112.00 L275.79 111.77 L270.03 111.21 L263.88 110.51 L257.84 109.84 L252.39 109.41 L248.00 109.40 L244.87 109.83 L242.63 110.57 L240.99 111.53 L239.61 112.66 L238.19 113.87 L236.40 115.10 L234.27 116.45 L232.06 118.01 L229.80 119.66 L227.53 121.28 L225.28 122.76 L223.10 124.00 L221.02 125.03 L219.03 125.94 L217.06 126.73 L215.06 127.34 L212.96 127.78 L210.70 128.00 L208.15 127.84 L205.33 127.27 L202.42 126.53 L199.58 125.80 L196.98 125.32 L194.80 125.30 L193.11 125.72 L191.80 126.41 L190.74 127.35 L189.79 128.50 L188.82 129.82 L187.70 131.30 L186.44 133.00 L185.15 134.97 L183.84 137.11 L182.54 139.36 L181.25 141.61 L180.00 143.80 L178.82 145.90 L177.69 147.99 L176.58 150.08 L175.46 152.23 L174.27 154.45 L173.00 156.80 L171.63 159.28 L170.20 161.86 L168.72 164.52 L167.19 167.24 L165.61 170.01 L164.00 172.80 L162.33 175.70 L160.57 178.76 L158.78 181.86 L156.98 184.89 L155.21 187.74 L153.50 190.30 L151.84 192.60 L150.20 194.74 L148.59 196.70 L147.02 198.47 L145.48 200.04 L144.00 201.40 L142.57 202.55 L141.19 203.51 L139.84 204.26 L138.54 204.81 L137.26 205.16 L136.00 205.30 L134.78 205.23 L133.61 204.94 L132.46 204.45 L131.33 203.76 L130.18 202.87 L129.00 201.80 L127.77 200.48 L126.49 198.90 L125.19 197.12 L123.93 195.22 L122.72 193.26 L121.60 191.30 L120.60 189.35 L119.68 187.35 L118.82 185.29 L117.99 183.15 L117.16 180.93 L116.30 178.60 L115.42 176.15 L114.53 173.58 L113.65 170.92 L112.77 168.20 L111.88 165.45 L111.00 162.70 L110.14 159.98 L109.31 157.27 L108.48 154.52 L107.62 151.71 L106.70 148.78 L105.70 145.70 L104.57 142.28 L103.33 138.53 L102.03 134.66 L100.73 130.90 L99.47 127.47 L98.30 124.60 L97.25 122.18 L96.29 120.01 L95.37 118.17 L94.46 116.75 L93.51 115.83 L92.50 115.50 L91.41 115.98 L90.27 117.24 L89.10 119.00 L87.92 120.99 L86.75 122.91 L85.60 124.50 L84.51 125.81 L83.47 127.07 L82.43 128.28 L81.37 129.41 L80.24 130.46 L79.00 131.40 L77.70 132.30 L76.36 133.18 L74.96 133.98 L73.46 134.61 L71.82 135.01 L70.00 135.10 L67.90 134.80 L65.52 134.14 L63.00 133.25 L60.48 132.25 L58.10 131.26 L56.00 130.40 L54.22 129.66 L52.67 128.93 L51.25 128.21 L49.89 127.50 L48.50 126.79 L47.00 126.10 L45.40 125.40 L43.78 124.70 L42.12 124.01 L40.44 123.34 L38.74 122.70 L37.00 122.10 L35.21 121.56 L33.37 121.06 L31.50 120.60 L29.63 120.15 L27.79 119.69 L26.00 119.20 L24.25 118.68 L22.52 118.16 L20.81 117.62 L19.15 117.08 L17.54 116.54 L16.00 116.00 L14.46 115.43 L12.89 114.81 L11.38 114.20 L10.00 113.63 L8.85 113.15 L8.00 112.80Z" fill="#ffffff"/></svg>
<div class="r" style="left:534px;top:126px;width:8px;height:8px;background:#bf3b3e;box-shadow:0 0 0 0.5px #5a2020;"></div>
<div class="r" style="left:534px;top:659px;width:8px;height:8px;background:#bf3b3e;box-shadow:0 0 0 0.5px #5a2020;"></div>
<div class="r" style="left:1007.5px;top:126px;width:8px;height:8px;background:#bf3b3e;box-shadow:0 0 0 0.5px #5a2020;"></div>
<div class="r" style="left:1007.5px;top:659px;width:8px;height:8px;background:#bf3b3e;box-shadow:0 0 0 0.5px #5a2020;"></div>
<div class="r" style="left:1481px;top:126px;width:8px;height:8px;background:#bf3b3e;box-shadow:0 0 0 0.5px #5a2020;"></div>
<div class="r" style="left:1481px;top:659px;width:8px;height:8px;background:#bf3b3e;box-shadow:0 0 0 0.5px #5a2020;"></div>
<div class="r" style="left:1481px;top:393px;width:8px;height:8px;background:#bf3b3e;box-shadow:0 0 0 0.5px #5a2020;"></div>
<svg class="r" style="left:530px;top:389px;" width="16" height="16" viewBox="0 0 16 16"><circle cx="8.2" cy="8.2" r="5.2" fill="#bf3b3e" stroke="#c8c8c8" stroke-width="0.8"/></svg>
<svg class="r" style="left:1000px;top:385px;" width="25" height="25" viewBox="0 0 25 25"><path d="M12.4 3V8M12.4 17V22M3 12.4H8M17 12.4H22" stroke="#e0e0e0" stroke-width="2.6"/><circle cx="12.4" cy="12.4" r="4.6" fill="#d0d0d0" stroke="#e8e8e8" stroke-width="2.4"/><path d="M12.4 3V8M12.4 17V22M3 12.4H8M17 12.4H22" stroke="#bf3b3e" stroke-width="1.2"/><circle cx="12.4" cy="12.4" r="4.6" fill="none" stroke="#bf3b3e" stroke-width="1.2"/><path d="M12.4 10V15M10 12.4H15" stroke="#bf3b3e" stroke-width="0.9"/></svg>
<div class="r" style="left:326px;top:667px;width:1371px;height:1px;background:#080808;"></div>
<div class="r" style="left:325px;top:668px;width:1372px;height:23px;background:#232323;"></div>
<div class="r" style="left:326px;top:668px;width:1371px;height:1px;background:#2c2c2c;"></div>
<svg class="r" style="left:330px;top:673px;" width="16" height="13" viewBox="0 0 16 13"><rect x="1" y="1" width="9" height="6" fill="#b8b8b8"/><path d="M4 2.3L7 4L4 5.7Z" fill="#232323"/><path d="M11.5 2.5V8.5H3.5M13.5 4.5V10.5H5.5" stroke="#b8b8b8" stroke-width="1" fill="none"/></svg>
<svg class="r" style="left:352px;top:673px;" width="14" height="12" viewBox="0 0 14 12"><rect x="0.6" y="0.6" width="12" height="8" fill="none" stroke="#b8b8b8" stroke-width="1.2"/><path d="M6.5 9V11M3.5 11.2H9.5" stroke="#b8b8b8" stroke-width="1.2"/></svg>
<svg class="r" style="left:372px;top:673px;" width="18" height="15" viewBox="0 0 18 15"><path d="M1 4C1 2 2.5 1 5 1H12C14.5 1 16 2 16 4V6C16 8 14.5 9 12.5 9C10.5 9 10 7.5 8.5 7.5C7 7.5 6.5 9 4.5 9C2.5 9 1 8 1 6Z" fill="#b8b8b8"/><circle cx="5" cy="4.8" r="1.4" fill="#232323"/><circle cx="12" cy="4.8" r="1.4" fill="#232323"/><path d="M8 11H12L10 13.5Z" fill="#b8b8b8"/></svg>
<div class="r" style="left:393px;top:670px;width:69px;height:19px;box-sizing:border-box;border:1px solid #2b2b2b;background:#1c1c1c;border-radius:3px;"></div>
<div class="t" style="left:399px;top:673.69px;font-size:11px;color:#b4b4b4;letter-spacing:-0.2px;">(49,4%)</div>
<svg class="r" style="left:448px;top:677px;" width="9" height="6" viewBox="0 0 9 6"><path d="M1 1L4.5 4.5L8 1" stroke="#c8c8c8" stroke-width="1.1" fill="none"/></svg>
<svg class="r" style="left:465px;top:671px;" width="17" height="18" viewBox="0 0 17 18"><rect x="1.5" y="2.5" width="13" height="9" fill="none" stroke="#b8b8b8" stroke-width="1.1"/><path d="M8 0V4M8 10V13M0 7H3M13 7H16M6.5 7H9.5M8 5.5V8.5" stroke="#b8b8b8" stroke-width="1"/><path d="M8 14H12L10 16.5Z" fill="#b8b8b8"/></svg>
<div class="r" style="left:485px;top:670px;width:21px;height:19px;box-sizing:border-box;border:1px solid #232323;background:#181818;border-radius:3px;"></div>
<svg class="r" style="left:487px;top:672px;" width="17" height="15" viewBox="0 0 17 15"><path d="M2 7.5L6.5 2H14.5V13H2Z" fill="none" stroke="#2d8ceb" stroke-width="1.4"/><circle cx="6.5" cy="2" r="1.2" fill="#2d8ceb"/><circle cx="14.5" cy="2" r="1.2" fill="#2d8ceb"/><circle cx="2" cy="7.5" r="1.2" fill="#2d8ceb"/><circle cx="2" cy="13" r="1.2" fill="#2d8ceb"/><circle cx="14.5" cy="13" r="1.2" fill="#2d8ceb"/></svg>
<div class="t" style="left:515px;top:674.19px;font-size:11px;color:#9fa8b4;letter-spacing:0.1px;">0;00;06;29</div>
<div class="r" style="left:574px;top:670px;width:1px;height:19px;background:#262626;"></div>
<svg class="r" style="left:579px;top:673px;" width="16" height="13" viewBox="0 0 16 13"><path d="M1 4H4.5L6 2H10L11.5 4H15V12H1Z" fill="#b8b8b8"/><circle cx="8" cy="7.8" r="2.6" fill="#232323"/><circle cx="8" cy="7.8" r="1.5" fill="#b8b8b8"/></svg>
<svg class="r" style="left:600px;top:672px;" width="18" height="15" viewBox="0 0 18 15"><path d="M1 9C3 6 5 5 8 5C11 5 13 6 15 9C13 12 11 13 8 13C5 13 3 12 1 9Z" fill="#3e3e3e"/><circle cx="8" cy="9" r="2" fill="#232323"/><rect x="10" y="1" width="6" height="5" fill="#3e3e3e"/></svg>
<svg class="r" style="left:624px;top:672px;" width="17" height="17" viewBox="0 0 17 17"><circle cx="7.5" cy="4" r="3" fill="#e8202a"/><circle cx="4.3" cy="9" r="3" fill="#20c030"/><circle cx="10.7" cy="9" r="3" fill="#3a70e8"/><path d="M10 13H15L12.5 16Z" fill="#b8b8b8"/></svg>
<div class="r" style="left:643px;top:670px;width:86px;height:19px;box-sizing:border-box;border:1px solid #2b2b2b;background:#1c1c1c;border-radius:3px;"></div>
<div class="t" style="left:650px;top:674.19px;font-size:11px;color:#b4b4b4;">Full</div>
<svg class="r" style="left:715px;top:677px;" width="9" height="6" viewBox="0 0 9 6"><path d="M1 1L4.5 4.5L8 1" stroke="#c8c8c8" stroke-width="1.1" fill="none"/></svg>
<svg class="r" style="left:732px;top:672px;" width="16" height="14" viewBox="0 0 16 14"><rect x="1" y="1" width="13" height="11" fill="none" stroke="#b8b8b8" stroke-width="1.2"/><rect x="4" y="4" width="7" height="5" fill="#b8b8b8"/></svg>
<svg class="r" style="left:754px;top:672px;" width="15" height="15" viewBox="0 0 15 15"><rect x="0.5" y="0.5" width="13" height="13" fill="none" stroke="#b8b8b8"/><rect x="1" y="1" width="3" height="3" fill="#9a9a9a"/><rect x="1" y="4" width="3" height="3" fill="#3a3a3a"/><rect x="1" y="7" width="3" height="3" fill="#9a9a9a"/><rect x="1" y="10" width="3" height="3" fill="#3a3a3a"/><rect x="4" y="1" width="3" height="3" fill="#3a3a3a"/><rect x="4" y="4" width="3" height="3" fill="#9a9a9a"/><rect x="4" y="7" width="3" height="3" fill="#3a3a3a"/><rect x="4" y="10" width="3" height="3" fill="#9a9a9a"/><rect x="7" y="1" width="3" height="3" fill="#9a9a9a"/><rect x="7" y="4" width="3" height="3" fill="#3a3a3a"/><rect x="7" y="7" width="3" height="3" fill="#9a9a9a"/><rect x="7" y="10" width="3" height="3" fill="#3a3a3a"/><rect x="10" y="1" width="3" height="3" fill="#3a3a3a"/><rect x="10" y="4" width="3" height="3" fill="#9a9a9a"/><rect x="10" y="7" width="3" height="3" fill="#3a3a3a"/><rect x="10" y="10" width="3" height="3" fill="#9a9a9a"/></svg>
<div class="r" style="left:773px;top:670px;width:106px;height:19px;box-sizing:border-box;border:1px solid #2b2b2b;background:#1c1c1c;border-radius:3px;"></div>
<div class="t" style="left:780px;top:674.19px;font-size:11px;color:#b4b4b4;letter-spacing:0.15px;">Active Camera</div>
<svg class="r" style="left:865px;top:677px;" width="9" height="6" viewBox="0 0 9 6"><path d="M1 1L4.5 4.5L8 1" stroke="#c8c8c8" stroke-width="1.1" fill="none"/></svg>
<div class="r" style="left:882px;top:670px;width:69px;height:19px;box-sizing:border-box;border:1px solid #2b2b2b;background:#1c1c1c;border-radius:3px;"></div>
<div class="t" style="left:888px;top:674.19px;font-size:11px;color:#b4b4b4;letter-spacing:0.1px;">1 View</div>
<svg class="r" style="left:937px;top:677px;" width="9" height="6" viewBox="0 0 9 6"><path d="M1 1L4.5 4.5L8 1" stroke="#c8c8c8" stroke-width="1.1" fill="none"/></svg>
<svg class="r" style="left:953px;top:672px;" width="18" height="16" viewBox="0 0 18 16"><path d="M1 3H16M1 3L3.5 1M1 3L3.5 5M16 3L13.5 1M16 3L13.5 5" stroke="#b8b8b8" stroke-width="1.2" fill="none"/><rect x="4" y="8" width="9" height="6" fill="none" stroke="#b8b8b8" stroke-width="1.3"/></svg>
<div class="r" style="left:975px;top:670px;width:22px;height:19px;box-sizing:border-box;border:1px solid #1e1e1e;background:#181818;border-radius:3px;"></div>
<svg class="r" style="left:977px;top:672px;" width="17" height="15" viewBox="0 0 17 15"><rect x="1" y="1" width="14" height="10" fill="none" stroke="#b8b8b8" stroke-width="1.2"/><path d="M8.5 2.5L5.5 7H8L6.5 11L10.5 6H8Z" fill="#b8b8b8"/><path d="M11 11H16L13.5 13.5Z" fill="#b8b8b8"/></svg>
<svg class="r" style="left:999px;top:672px;" width="15" height="14" viewBox="0 0 15 14"><rect x="5" y="1" width="5" height="4" fill="#b8b8b8"/><path d="M1 13V7M4.5 13V8M7.5 13V5M10.5 13V8M14 13V7M1 13H14" stroke="#b8b8b8" stroke-width="1.3"/></svg>
<svg class="r" style="left:1019px;top:671px;" width="16" height="16" viewBox="0 0 16 16"><rect x="5.5" y="1" width="5" height="4" fill="#b8b8b8"/><rect x="1" y="10" width="5" height="5" fill="#b8b8b8"/><rect x="10" y="10" width="5" height="5" fill="#b8b8b8"/><path d="M8 5V7.5M3.5 10V7.5H12.5V10" stroke="#b8b8b8" stroke-width="1.2" fill="none"/></svg>
<div class="r" style="left:1040px;top:670px;width:1px;height:19px;background:#1a1a1a;"></div>
<svg class="r" style="left:1044px;top:672px;" width="15" height="15" viewBox="0 0 15 15"><circle cx="7.5" cy="7.5" r="6.5" fill="#b8b8b8"/><circle cx="7.5" cy="7.5" r="2.6" fill="#232323"/><path d="M7.5 1L9 5M13.5 5L10 7M12 12.5L8.5 10M3 12L6 9.5M1.5 5.5L5 6.5" stroke="#232323" stroke-width="1"/></svg>
<div class="t" style="left:1065px;top:674.19px;font-size:11px;color:#2d8ceb;letter-spacing:-0.2px;">+0,0</div>
<div class="r" style="left:1701px;top:72px;width:219px;height:619px;background:#232323;"></div>
<div class="r" style="left:1907px;top:72px;width:13px;height:619px;background:#1f1f1f;"></div>
<div class="r" style="left:1908px;top:73px;width:10px;height:420px;background:#333333;border-radius:5px;"></div>
<div class="t" style="left:1714px;top:80.69px;font-size:11px;color:#a9a9a9;">Info</div>
<div class="r" style="left:1702px;top:99px;width:204px;height:2px;background:#1a1a1a;"></div>
<div class="t" style="left:1714px;top:110.69px;font-size:11px;color:#a9a9a9;">Audio</div>
<div class="r" style="left:1702px;top:129px;width:204px;height:2px;background:#1a1a1a;"></div>
<div class="t" style="left:1714px;top:140.19px;font-size:11px;color:#b8b8b8;letter-spacing:-0.1px;">Effects &amp; Presets</div>
<svg class="r" style="left:1887px;top:142px;" width="10" height="9" viewBox="0 0 10 9"><path d="M1 1.5H9M1 4.5H9M1 7.5H9" stroke="#c8c8c8" stroke-width="1.2"/></svg>
<div class="r" style="left:1707px;top:163px;width:195px;height:18px;box-sizing:border-box;border:1px solid #2a2a2a;background:#181818;border-radius:3px;"></div>
<svg class="r" style="left:1712px;top:165px;" width="18" height="14" viewBox="0 0 18 14"><circle cx="8.5" cy="5" r="3.6" fill="none" stroke="#c0c0c0" stroke-width="1.1"/><path d="M6 7.5L2 11.5" stroke="#c0c0c0" stroke-width="1.3"/><path d="M11 8.5H16L13.5 11Z" fill="#c0c0c0"/></svg>
<div class="r" style="left:1702px;top:184px;width:204px;height:1px;background:#0e0e0e;"></div>
<div class="r" style="left:1702px;top:185px;width:204px;height:442px;background:#1e1e1e;"></div>
<div class="r" style="left:1702px;top:185px;width:204px;height:16px;background:#262626;"></div>
<svg class="r" style="left:1705px;top:189px;" width="10" height="9" viewBox="0 0 10 9"><path d="M1 0.5L9 4.5L1 8.5Z" fill="#b8b8b8"/></svg>
<div class="t" style="left:1718px;top:187.69px;font-size:11px;color:#b4b4b4;letter-spacing:-0.05px;">* Animation Presets</div>
<div class="r" style="left:1702px;top:202px;width:204px;height:16px;background:#262626;"></div>
<svg class="r" style="left:1705px;top:206px;" width="10" height="9" viewBox="0 0 10 9"><path d="M1 0.5L9 4.5L1 8.5Z" fill="#b8b8b8"/></svg>
<div class="t" style="left:1718px;top:204.69px;font-size:11px;color:#b4b4b4;letter-spacing:-0.05px;">3D Channel</div>
<div class="r" style="left:1702px;top:219px;width:204px;height:16px;background:#262626;"></div>
<svg class="r" style="left:1705px;top:223px;" width="10" height="9" viewBox="0 0 10 9"><path d="M1 0.5L9 4.5L1 8.5Z" fill="#b8b8b8"/></svg>
<div class="t" style="left:1718px;top:221.69px;font-size:11px;color:#b4b4b4;letter-spacing:-0.05px;">Audio</div>
<div class="r" style="left:1702px;top:236px;width:204px;height:16px;background:#262626;"></div>
<svg class="r" style="left:1705px;top:240px;" width="10" height="9" viewBox="0 0 10 9"><path d="M1 0.5L9 4.5L1 8.5Z" fill="#b8b8b8"/></svg>
<div class="t" style="left:1718px;top:238.69px;font-size:11px;color:#b4b4b4;letter-spacing:-0.05px;">Blur &amp; Sharpen</div>
<div class="r" style="left:1702px;top:253px;width:204px;height:16px;background:#262626;"></div>
<svg class="r" style="left:1705px;top:257px;" width="10" height="9" viewBox="0 0 10 9"><path d="M1 0.5L9 4.5L1 8.5Z" fill="#b8b8b8"/></svg>
<div class="t" style="left:1718px;top:255.69px;font-size:11px;color:#b4b4b4;letter-spacing:-0.05px;">Channel</div>
<div class="r" style="left:1702px;top:270px;width:204px;height:16px;background:#262626;"></div>
<svg class="r" style="left:1705px;top:274px;" width="10" height="9" viewBox="0 0 10 9"><path d="M1 0.5L9 4.5L1 8.5Z" fill="#b8b8b8"/></svg>
<div class="t" style="left:1718px;top:272.69px;font-size:11px;color:#b4b4b4;letter-spacing:-0.05px;">CINEMA 4D</div>
<div class="r" style="left:1702px;top:287px;width:204px;height:16px;background:#262626;"></div>
<svg class="r" style="left:1705px;top:291px;" width="10" height="9" viewBox="0 0 10 9"><path d="M1 0.5L9 4.5L1 8.5Z" fill="#b8b8b8"/></svg>
<div class="t" style="left:1718px;top:289.69px;font-size:11px;color:#b4b4b4;letter-spacing:-0.05px;">Color Correction</div>
<div class="r" style="left:1702px;top:304px;width:204px;height:16px;background:#262626;"></div>
<svg class="r" style="left:1705px;top:308px;" width="10" height="9" viewBox="0 0 10 9"><path d="M1 0.5L9 4.5L1 8.5Z" fill="#b8b8b8"/></svg>
<div class="t" style="left:1718px;top:306.69px;font-size:11px;color:#b4b4b4;letter-spacing:-0.05px;">Distort</div>
<div class="r" style="left:1702px;top:321px;width:204px;height:16px;background:#262626;"></div>
<svg class="r" style="left:1705px;top:325px;" width="10" height="9" viewBox="0 0 10 9"><path d="M1 0.5L9 4.5L1 8.5Z" fill="#b8b8b8"/></svg>
<div class="t" style="left:1718px;top:323.69px;font-size:11px;color:#b4b4b4;letter-spacing:-0.05px;">Expression Controls</div>
<div class="r" style="left:1702px;top:338px;width:204px;height:16px;background:#262626;"></div>
<svg class="r" style="left:1705px;top:342px;" width="10" height="9" viewBox="0 0 10 9"><path d="M1 0.5L9 4.5L1 8.5Z" fill="#b8b8b8"/></svg>
<div class="t" style="left:1718px;top:340.69px;font-size:11px;color:#b4b4b4;letter-spacing:-0.05px;">Generate</div>
<div class="r" style="left:1702px;top:355px;width:204px;height:16px;background:#262626;"></div>
<svg class="r" style="left:1705px;top:359px;" width="10" height="9" viewBox="0 0 10 9"><path d="M1 0.5L9 4.5L1 8.5Z" fill="#b8b8b8"/></svg>
<div class="t" style="left:1718px;top:357.69px;font-size:11px;color:#b4b4b4;letter-spacing:-0.05px;">Immersive Video</div>
<div class="r" style="left:1702px;top:372px;width:204px;height:16px;background:#262626;"></div>
<svg class="r" style="left:1705px;top:376px;" width="10" height="9" viewBox="0 0 10 9"><path d="M1 0.5L9 4.5L1 8.5Z" fill="#b8b8b8"/></svg>
<div class="t" style="left:1718px;top:374.69px;font-size:11px;color:#b4b4b4;letter-spacing:-0.05px;">Keying</div>
<div class="r" style="left:1702px;top:389px;width:204px;height:16px;background:#262626;"></div>
<svg class="r" style="left:1705px;top:393px;" width="10" height="9" viewBox="0 0 10 9"><path d="M1 0.5L9 4.5L1 8.5Z" fill="#b8b8b8"/></svg>
<div class="t" style="left:1718px;top:391.69px;font-size:11px;color:#b4b4b4;letter-spacing:-0.05px;">Matte</div>
<div class="r" style="left:1702px;top:406px;width:204px;height:16px;background:#262626;"></div>
<svg class="r" style="left:1705px;top:410px;" width="10" height="9" viewBox="0 0 10 9"><path d="M1 0.5L9 4.5L1 8.5Z" fill="#b8b8b8"/></svg>
<div class="t" style="left:1718px;top:408.69px;font-size:11px;color:#b4b4b4;letter-spacing:-0.05px;">Noise &amp; Grain</div>
<div class="r" style="left:1702px;top:423px;width:204px;height:16px;background:#262626;"></div>
<svg class="r" style="left:1705px;top:427px;" width="10" height="9" viewBox="0 0 10 9"><path d="M1 0.5L9 4.5L1 8.5Z" fill="#b8b8b8"/></svg>
<div class="t" style="left:1718px;top:425.69px;font-size:11px;color:#b4b4b4;letter-spacing:-0.05px;">Obsolete</div>
<div class="r" style="left:1702px;top:440px;width:204px;height:16px;background:#262626;"></div>
<svg class="r" style="left:1705px;top:444px;" width="10" height="9" viewBox="0 0 10 9"><path d="M1 0.5L9 4.5L1 8.5Z" fill="#b8b8b8"/></svg>
<div class="t" style="left:1718px;top:442.69px;font-size:11px;color:#b4b4b4;letter-spacing:-0.05px;">Perspective</div>
<div class="r" style="left:1702px;top:457px;width:204px;height:16px;background:#262626;"></div>
<svg class="r" style="left:1705px;top:461px;" width="10" height="9" viewBox="0 0 10 9"><path d="M1 0.5L9 4.5L1 8.5Z" fill="#b8b8b8"/></svg>
<div class="t" style="left:1718px;top:459.69px;font-size:11px;color:#b4b4b4;letter-spacing:-0.05px;">Red Giant</div>
<div class="r" style="left:1702px;top:474px;width:204px;height:16px;background:#262626;"></div>
<svg class="r" style="left:1705px;top:478px;" width="10" height="9" viewBox="0 0 10 9"><path d="M1 0.5L9 4.5L1 8.5Z" fill="#b8b8b8"/></svg>
<div class="t" style="left:1718px;top:476.69px;font-size:11px;color:#b4b4b4;letter-spacing:-0.05px;">RG Trapcode</div>
<div class="r" style="left:1702px;top:491px;width:204px;height:16px;background:#262626;"></div>
<svg class="r" style="left:1705px;top:495px;" width="10" height="9" viewBox="0 0 10 9"><path d="M1 0.5L9 4.5L1 8.5Z" fill="#b8b8b8"/></svg>
<div class="t" style="left:1718px;top:493.69px;font-size:11px;color:#b4b4b4;letter-spacing:-0.05px;">Simulation</div>
<div class="r" style="left:1702px;top:508px;width:204px;height:16px;background:#262626;"></div>
<svg class="r" style="left:1705px;top:512px;" width="10" height="9" viewBox="0 0 10 9"><path d="M1 0.5L9 4.5L1 8.5Z" fill="#b8b8b8"/></svg>
<div class="t" style="left:1718px;top:510.69px;font-size:11px;color:#b4b4b4;letter-spacing:-0.05px;">Stylize</div>
<div class="r" style="left:1702px;top:525px;width:204px;height:16px;background:#262626;"></div>
<svg class="r" style="left:1705px;top:529px;" width="10" height="9" viewBox="0 0 10 9"><path d="M1 0.5L9 4.5L1 8.5Z" fill="#b8b8b8"/></svg>
<div class="t" style="left:1718px;top:527.69px;font-size:11px;color:#b4b4b4;letter-spacing:-0.05px;">Synthetic Aperture</div>
<div class="r" style="left:1702px;top:542px;width:204px;height:16px;background:#262626;"></div>
<svg class="r" style="left:1705px;top:546px;" width="10" height="9" viewBox="0 0 10 9"><path d="M1 0.5L9 4.5L1 8.5Z" fill="#b8b8b8"/></svg>
<div class="t" style="left:1718px;top:544.69px;font-size:11px;color:#b4b4b4;letter-spacing:-0.05px;">Text</div>
<div class="r" style="left:1702px;top:559px;width:204px;height:16px;background:#262626;"></div>
<svg class="r" style="left:1705px;top:563px;" width="10" height="9" viewBox="0 0 10 9"><path d="M1 0.5L9 4.5L1 8.5Z" fill="#b8b8b8"/></svg>
<div class="t" style="left:1718px;top:561.69px;font-size:11px;color:#b4b4b4;letter-spacing:-0.05px;">Time</div>
<div class="r" style="left:1702px;top:576px;width:204px;height:16px;background:#262626;"></div>
<svg class="r" style="left:1705px;top:580px;" width="10" height="9" viewBox="0 0 10 9"><path d="M1 0.5L9 4.5L1 8.5Z" fill="#b8b8b8"/></svg>
<div class="t" style="left:1718px;top:578.69px;font-size:11px;color:#b4b4b4;letter-spacing:-0.05px;">Transition</div>
<div class="r" style="left:1702px;top:593px;width:204px;height:16px;background:#262626;"></div>
<svg class="r" style="left:1705px;top:597px;" width="10" height="9" viewBox="0 0 10 9"><path d="M1 0.5L9 4.5L1 8.5Z" fill="#b8b8b8"/></svg>
<div class="t" style="left:1718px;top:595.69px;font-size:11px;color:#b4b4b4;letter-spacing:-0.05px;">Utility</div>
<div class="r" style="left:1702px;top:610px;width:204px;height:16px;background:#262626;"></div>
<svg class="r" style="left:1705px;top:614px;" width="10" height="9" viewBox="0 0 10 9"><path d="M1 0.5L9 4.5L1 8.5Z" fill="#b8b8b8"/></svg>
<div class="t" style="left:1718px;top:612.69px;font-size:11px;color:#b4b4b4;letter-spacing:-0.05px;">Video Copilot</div>
<div class="r" style="left:1702px;top:627px;width:204px;height:1px;background:#0a0a0a;"></div>
<div class="r" style="left:1702px;top:628px;width:204px;height:19px;background:#232323;"></div>
<div class="r" style="left:1905px;top:628px;width:1px;height:16px;background:#0a0a0a;"></div>
<svg class="r" style="left:1886px;top:629px;" width="14" height="14" viewBox="0 0 14 14"><path d="M2 1H13V13H6.5L2 8.5Z" fill="#c4c4c4"/><path d="M2 9.5L5.5 13H2Z" fill="#c4c4c4"/><path d="M2 8.5L6.5 13" stroke="#232323" stroke-width="0.9"/></svg>
<div class="r" style="left:1702px;top:647px;width:204px;height:1px;background:#1a1a1a;"></div>
<div class="t" style="left:1714px;top:657.99px;font-size:11px;color:#a9a9a9;">Libraries</div>
<div class="r" style="left:1702px;top:676px;width:204px;height:2px;background:#1a1a1a;"></div>
<div class="t" style="left:1714px;top:688.69px;font-size:11px;color:#a9a9a9;clip-path:inset(0 0 8px 0);">Ali</div>
<div class="r" style="left:1px;top:695px;width:1919px;height:342px;background:#232323;"></div>
<svg class="r" style="left:11px;top:705px;" width="9" height="9" viewBox="0 0 9 9"><path d="M1.5 1.5L7 7M7 1.5L1.5 7" stroke="#9a9a9a" stroke-width="1"/></svg>
<div class="r" style="left:27px;top:703px;width:10px;height:10px;background:#b59d7b;"></div>
<div class="t" style="left:49px;top:703.69px;font-size:11px;color:#a9a9a9;letter-spacing:-0.35px;">AUDİO SPECTRUM</div>
<svg class="r" style="left:152px;top:705px;" width="10" height="9" viewBox="0 0 10 9"><path d="M1 1.5H9M1 4.5H9M1 7.5H9" stroke="#c8c8c8" stroke-width="1.2"/></svg>
<div class="t" style="left:11.5px;top:726.11px;font-size:17px;color:#2d8ceb;font-weight:700;">0;00;06;29</div>
<div class="t" style="left:13px;top:746.03px;font-size:10px;color:#2a6fba;letter-spacing:0px;">00209 (29.97 fps)</div>
<div class="r" style="left:107px;top:731px;width:498px;height:19px;box-sizing:border-box;border:1px solid #2a2a2a;background:#181818;border-radius:3px;"></div>
<svg class="r" style="left:112px;top:733px;" width="18" height="14" viewBox="0 0 18 14"><circle cx="8.5" cy="5" r="3.6" fill="none" stroke="#c0c0c0" stroke-width="1.1"/><path d="M6 7.5L2 11.5" stroke="#c0c0c0" stroke-width="1.3"/><path d="M11 8.5H16L13.5 11Z" fill="#c0c0c0"/></svg>
<svg class="r" style="left:620px;top:734px;" width="20" height="15" viewBox="0 0 20 15"><path d="M1 3H6M6 3H9M9 3V9H11M9 3H11" stroke="#b8b8b8" stroke-width="1.2" fill="none"/><rect x="3" y="1.5" width="4" height="3" fill="#b8b8b8"/><rect x="11" y="1.5" width="5" height="3" fill="#b8b8b8"/><rect x="11" y="7.5" width="5" height="3" fill="#b8b8b8"/><path d="M13 12H17L15 14Z" fill="#b8b8b8"/></svg>
<svg class="r" style="left:653px;top:730px;" width="19" height="19" viewBox="0 0 19 19"><circle cx="4.5" cy="4.5" r="2.5" fill="#b8b8b8"/><path d="M4.5 0V9M0 4.5H9M1.3 1.3L7.7 7.7M7.7 1.3L1.3 7.7" stroke="#b8b8b8" stroke-width="0.8"/><path d="M11.5 6.5L17 9V15L11.5 17.5L6 15V9Z M6 9L11.5 11.5L17 9 M11.5 11.5V17.5" stroke="#b8b8b8" stroke-width="1.1" fill="none"/></svg>
<svg class="r" style="left:688px;top:732px;" width="18" height="15" viewBox="0 0 18 15"><path d="M3 7C3 3 5.5 1.5 8.5 1.5C11.5 1.5 14 3 14 7Z" fill="#b8b8b8"/><rect x="1" y="7" width="15" height="1.2" fill="#b8b8b8"/><rect x="1" y="9.5" width="15" height="4.5" fill="#777"/><rect x="7.6" y="4" width="1.8" height="9" fill="#b8b8b8"/><circle cx="6" cy="4.8" r="1" fill="#232323"/><circle cx="11" cy="4.8" r="1" fill="#232323"/></svg>
<svg class="r" style="left:715px;top:732px;" width="16" height="16" viewBox="0 0 16 16"><rect x="5" y="1" width="10" height="11" fill="none" stroke="#b8b8b8" stroke-width="1.2"/><rect x="1" y="4" width="3" height="11" fill="#b8b8b8"/><rect x="1" y="13" width="10" height="2" fill="#b8b8b8"/><path d="M7.5 6.5H12.5" stroke="#b8b8b8" stroke-width="1.4"/></svg>
<svg class="r" style="left:741px;top:732px;" width="16" height="16" viewBox="0 0 16 16"><circle cx="10" cy="6" r="5" fill="#777" stroke="#b8b8b8" stroke-width="1"/><path d="M3.5 7A5 5 0 0 0 9 13.5M2 9.5A5 5 0 0 0 7 15" stroke="#b8b8b8" stroke-width="1" fill="none"/></svg>
<svg class="r" style="left:774px;top:730px;" width="18" height="18" viewBox="0 0 18 18"><rect x="2" y="3" width="14" height="14" fill="none" stroke="#b8b8b8" stroke-width="1.2"/><path d="M4 5C7 5 8 9 9.5 11.5C11 14 12 14 14 14" stroke="#b8b8b8" stroke-width="1.1" fill="none"/><path d="M5 1V3M9 1V3M13 1V3M0 7H2M0 11H2" stroke="#b8b8b8" stroke-width="1"/></svg>
<div class="r" style="left:1px;top:757px;width:806px;height:1px;background:#141414;"></div>
<div class="r" style="left:1px;top:758px;width:806px;height:18px;background:#2a2a2a;"></div>
<div class="r" style="left:1px;top:776px;width:806px;height:2px;background:#0e0e0e;"></div>
<svg class="r" style="left:6px;top:762px;" width="14" height="10" viewBox="0 0 14 10"><path d="M1 5C3 2 5 1 7 1C9 1 11 2 13 5C11 8 9 9 7 9C5 9 3 8 1 5Z" fill="#b8b8b8"/><circle cx="7" cy="5" r="2" fill="#2a2a2a"/></svg>
<svg class="r" style="left:21px;top:760px;" width="13" height="14" viewBox="0 0 13 14"><path d="M1 4.5H3.5L7 1.5V12.5L3.5 9.5H1Z" fill="#b8b8b8"/><path d="M8.5 4A3.5 3.5 0 0 1 8.5 10M10 2A6 6 0 0 1 10 12" stroke="#b8b8b8" stroke-width="1" fill="none"/></svg>
<svg class="r" style="left:38px;top:762px;" width="10" height="10" viewBox="0 0 10 10"><circle cx="5" cy="5" r="3.6" fill="#b8b8b8"/></svg>
<svg class="r" style="left:51px;top:760px;" width="12" height="13" viewBox="0 0 12 13"><path d="M3 6V4A3 3 0 0 1 9 4V6" stroke="#b8b8b8" stroke-width="1.4" fill="none"/><rect x="1.5" y="6" width="9" height="6.5" fill="#b8b8b8"/><rect x="5.3" y="8" width="1.4" height="3" fill="#2a2a2a"/></svg>
<div class="r" style="left:69px;top:760px;width:1px;height:14px;background:#111;"></div>
<svg class="r" style="left:82px;top:760px;" width="15" height="15" viewBox="0 0 15 15"><path d="M1 1.5H7L14 8.5L8.5 14L1.5 7Z" fill="#b8b8b8"/><circle cx="4.5" cy="4.5" r="1.2" fill="#2a2a2a"/></svg>
<div class="r" style="left:101px;top:760px;width:1px;height:14px;background:#111;"></div>
<div class="t" style="left:107px;top:762.53px;font-size:10px;color:#8a8a8a;">#</div>
<div class="t" style="left:122px;top:762.53px;font-size:10px;color:#8a8a8a;">.</div>
<div class="r" style="left:134px;top:760px;width:1px;height:14px;background:#111;"></div>
<div class="t" style="left:140px;top:764.18px;font-size:9px;color:#a0a0a0;letter-spacing:0px;">Source Name</div>
<div class="r" style="left:332px;top:760px;width:1px;height:14px;background:#111;"></div>
<svg class="r" style="left:334px;top:760px;" width="15" height="14" viewBox="0 0 15 14"><path d="M3 8C3 4 5 2 7.5 2C10 2 12 4 12 8Z" fill="#b8b8b8"/><rect x="1" y="8" width="13" height="1.3" fill="#b8b8b8"/><rect x="6.8" y="4" width="1.4" height="9" fill="#b8b8b8"/><circle cx="5.3" cy="5.5" r="0.9" fill="#2a2a2a"/><circle cx="9.7" cy="5.5" r="0.9" fill="#2a2a2a"/><rect x="3" y="11" width="9" height="1" fill="#b8b8b8"/></svg>
<svg class="r" style="left:349px;top:761px;" width="12" height="12" viewBox="0 0 12 12"><circle cx="6" cy="6" r="2.5" fill="none" stroke="#b8b8b8" stroke-width="1"/><path d="M6 0V2.5M6 9.5V12M0 6H2.5M9.5 6H12M1.8 1.8L3.5 3.5M8.5 8.5L10.2 10.2M10.2 1.8L8.5 3.5M3.5 8.5L1.8 10.2" stroke="#b8b8b8" stroke-width="1"/></svg>
<svg class="r" style="left:364px;top:761px;" width="12" height="12" viewBox="0 0 12 12"><path d="M1 1L11 11" stroke="#b8b8b8" stroke-width="1.2" stroke-dasharray="1.6 1"/></svg>
<div class="t" style="left:379px;top:760.84px;font-size:12px;color:#b8b8b8;font-family:'Liberation Serif',serif;font-style:italic;">fx</div>
<svg class="r" style="left:394px;top:761px;" width="13" height="13" viewBox="0 0 13 13"><rect x="1" y="1" width="11" height="11" fill="none" stroke="#b8b8b8" stroke-width="1.1"/><path d="M3 1V12M10 1V12" stroke="#b8b8b8" stroke-width="1" stroke-dasharray="1 1"/><path d="M4.5 6.5H8.5" stroke="#b8b8b8" stroke-width="1.3"/></svg>
<svg class="r" style="left:408px;top:760px;" width="15" height="15" viewBox="0 0 15 15"><circle cx="9" cy="5.5" r="4.5" fill="#777" stroke="#b8b8b8" stroke-width="0.9"/><path d="M3 6A4.5 4.5 0 0 0 8 12M1.5 8.5A4.5 4.5 0 0 0 6 14" stroke="#b8b8b8" stroke-width="0.9" fill="none"/></svg>
<svg class="r" style="left:424px;top:761px;" width="12" height="12" viewBox="0 0 12 12"><circle cx="6" cy="6" r="5" fill="none" stroke="#b8b8b8" stroke-width="1.1"/><path d="M6 1A5 5 0 0 1 6 11Z" fill="#b8b8b8"/><path d="M9.5 2.5L2.5 9.5" stroke="#b8b8b8" stroke-width="1"/></svg>
<svg class="r" style="left:439px;top:760px;" width="14" height="14" viewBox="0 0 14 14"><path d="M7 1L12.5 3.5V10L7 12.5L1.5 10V3.5Z M1.5 3.5L7 6L12.5 3.5 M7 6V12.5" stroke="#b8b8b8" stroke-width="1.1" fill="none"/></svg>
<div class="r" style="left:495px;top:760px;width:1px;height:14px;background:#111;"></div>
<div class="t" style="left:501px;top:764.18px;font-size:9px;color:#8a8a8a;">Mode</div>
<div class="t" style="left:535px;top:762.53px;font-size:10px;color:#8a8a8a;">.</div>
<div class="t" style="left:583px;top:764.18px;font-size:9px;color:#8a8a8a;">T</div>
<div class="t" style="left:597px;top:764.18px;font-size:9px;color:#8a8a8a;">.TrkMat</div>
<div class="r" style="left:674px;top:760px;width:1px;height:14px;background:#111;"></div>
<div class="t" style="left:680px;top:764.18px;font-size:9px;color:#8a8a8a;">Parent &amp; Link</div>
<div class="r" style="left:791px;top:760px;width:1px;height:14px;background:#111;"></div>
<div class="r" style="left:1px;top:778px;width:806px;height:16px;background:#262626;"></div>
<div class="r" style="left:1px;top:794px;width:806px;height:1px;background:#1d1d1d;"></div>
<div class="r" style="left:21px;top:779px;width:13px;height:15px;background:#1d1d1d;"></div>
<svg class="r" style="left:21px;top:779px;" width="13" height="14" viewBox="0 0 13 14"><path d="M1 4.5H3.5L7 1.5V12.5L3.5 9.5H1Z" fill="#b8b8b8"/><path d="M8.5 4A3.5 3.5 0 0 1 8.5 10M10 2A6 6 0 0 1 10 12" stroke="#b8b8b8" stroke-width="1" fill="none"/></svg>
<div class="r" style="left:36px;top:779px;width:13px;height:15px;background:#1f1f1f;"></div>
<div class="r" style="left:51px;top:779px;width:13px;height:15px;background:#1f1f1f;"></div>
<svg class="r" style="left:74px;top:782px;" width="9" height="9" viewBox="0 0 9 9"><path d="M1 0.5L8 4.5L1 8.5Z" fill="#a8a8a8"/></svg>
<div class="r" style="left:87px;top:780px;width:12px;height:12px;background:#b6cbb4;"></div>
<div class="t" style="left:107px;top:780.69px;font-size:11px;color:#b4b4b4;">1</div>
<svg class="r" style="left:139px;top:779px;" width="10" height="13" viewBox="0 0 10 13"><path d="M0.5 0.5H7L9.5 3V12.5H0.5Z" fill="#f0f0f0"/><circle cx="5" cy="7" r="3" fill="none" stroke="#2d8ceb" stroke-width="1.2"/><circle cx="5" cy="7" r="1.2" fill="#2d8ceb"/></svg>
<div class="t" style="left:157px;top:781.19px;font-size:11px;color:#b8b8b8;letter-spacing:0.3px;">Müzik.mp3</div>
<div class="r" style="left:335px;top:779px;width:13px;height:15px;background:#1c1c1c;"></div>
<svg class="r" style="left:334px;top:779px;" width="15" height="14" viewBox="0 0 15 14"><path d="M3 8C3 4 5 2 7.5 2C10 2 12 4 12 8Z" fill="#b8b8b8"/><rect x="1" y="8" width="13" height="1.3" fill="#b8b8b8"/><rect x="6.8" y="4" width="1.4" height="9" fill="#b8b8b8"/><circle cx="5.3" cy="5.5" r="0.9" fill="#1c1c1c"/><circle cx="9.7" cy="5.5" r="0.9" fill="#1c1c1c"/><rect x="3" y="11" width="9" height="1" fill="#b8b8b8"/></svg>
<div class="r" style="left:363px;top:779px;width:13px;height:15px;background:#1c1c1c;"></div>
<svg class="r" style="left:363px;top:779px;" width="13" height="15" viewBox="0 0 13 15"><path d="M2 13L11 2" stroke="#b8b8b8" stroke-width="1.2"/></svg>
<div class="r" style="left:424px;top:779px;width:13px;height:15px;background:#1c1c1c;"></div>
<svg class="r" style="left:679px;top:779px;" width="14" height="14" viewBox="0 0 14 14"><path d="M7 11.5A4.5 4.5 0 1 1 11.5 7C11.5 9 10 10 8.5 10C7 10 6 9 6 7.5C6 6.5 6.7 6 7.3 6" stroke="#b8b8b8" stroke-width="1.2" fill="none"/></svg>
<div class="r" style="left:698px;top:778px;width:90px;height:16px;background:#1b1b1b;"></div>
<div class="t" style="left:705px;top:780.69px;font-size:11px;color:#c4c4c4;">None</div>
<svg class="r" style="left:773px;top:783px;" width="9" height="6" viewBox="0 0 9 6"><path d="M1 1L4.5 4.5L8 1" stroke="#c8c8c8" stroke-width="1.1" fill="none"/></svg>
<div class="r" style="left:1px;top:795px;width:806px;height:16px;background:#3a3a3a;"></div>
<div class="r" style="left:6px;top:796px;width:13px;height:15px;background:#2b2b2b;"></div>
<svg class="r" style="left:6px;top:798px;" width="14" height="10" viewBox="0 0 14 10"><path d="M1 5C3 2 5 1 7 1C9 1 11 2 13 5C11 8 9 9 7 9C5 9 3 8 1 5Z" fill="#b8b8b8"/><circle cx="7" cy="5" r="2" fill="#2b2b2b"/></svg>
<div class="r" style="left:36px;top:796px;width:13px;height:15px;background:#303030;"></div>
<div class="r" style="left:51px;top:796px;width:13px;height:15px;background:#303030;"></div>
<svg class="r" style="left:74px;top:799px;" width="9" height="9" viewBox="0 0 9 9"><path d="M1 0.5L8 4.5L1 8.5Z" fill="#a8a8a8"/></svg>
<div class="r" style="left:87px;top:797px;width:12px;height:12px;background:#c0393b;"></div>
<div class="t" style="left:108px;top:797.69px;font-size:11px;color:#b4b4b4;">2</div>
<div class="r" style="left:137px;top:796px;width:14px;height:14px;background:#000000;"></div>
<div class="r" style="left:153px;top:795px;width:176px;height:16px;box-sizing:border-box;border:2px solid #9a9a9a;background:#444444;"></div>
<div class="t" style="left:157px;top:797.69px;font-size:11px;color:#c8c8c8;letter-spacing:-0.05px;">Black Solid 1</div>
<div class="r" style="left:335px;top:796px;width:13px;height:15px;background:#2e2e2e;"></div>
<div class="r" style="left:363px;top:796px;width:13px;height:15px;background:#2e2e2e;"></div>
<div class="r" style="left:424px;top:796px;width:13px;height:15px;background:#2e2e2e;"></div>
<svg class="r" style="left:334px;top:796px;" width="15" height="14" viewBox="0 0 15 14"><path d="M3 8C3 4 5 2 7.5 2C10 2 12 4 12 8Z" fill="#b8b8b8"/><rect x="1" y="8" width="13" height="1.3" fill="#b8b8b8"/><rect x="6.8" y="4" width="1.4" height="9" fill="#b8b8b8"/><circle cx="5.3" cy="5.5" r="0.9" fill="#2e2e2e"/><circle cx="9.7" cy="5.5" r="0.9" fill="#2e2e2e"/><rect x="3" y="11" width="9" height="1" fill="#b8b8b8"/></svg>
<div class="r" style="left:350px;top:796px;width:12px;height:15px;background:#2e2e2e;"></div>
<svg class="r" style="left:363px;top:796px;" width="13" height="15" viewBox="0 0 13 15"><path d="M2 13L11 2" stroke="#b8b8b8" stroke-width="1.2"/></svg>
<div class="r" style="left:378px;top:796px;width:13px;height:15px;background:#2e2e2e;"></div>
<div class="t" style="left:379px;top:796.34px;font-size:12px;color:#b8b8b8;font-family:'Liberation Serif',serif;font-style:italic;">fx</div>
<div class="r" style="left:409px;top:796px;width:12px;height:15px;background:#303030;"></div>
<div class="r" style="left:424px;top:796px;width:12px;height:15px;background:#303030;"></div>
<div class="r" style="left:440px;top:796px;width:12px;height:15px;background:#303030;"></div>
<div class="r" style="left:498px;top:795px;width:77px;height:16px;background:#1b1b1b;"></div>
<div class="t" style="left:506px;top:797.69px;font-size:11px;color:#c4c4c4;">Normal</div>
<svg class="r" style="left:560px;top:800px;" width="9" height="6" viewBox="0 0 9 6"><path d="M1 1L4.5 4.5L8 1" stroke="#c8c8c8" stroke-width="1.1" fill="none"/></svg>
<div class="r" style="left:578px;top:796px;width:13px;height:15px;background:#303030;"></div>
<svg class="r" style="left:679px;top:796px;" width="14" height="14" viewBox="0 0 14 14"><path d="M7 11.5A4.5 4.5 0 1 1 11.5 7C11.5 9 10 10 8.5 10C7 10 6 9 6 7.5C6 6.5 6.7 6 7.3 6" stroke="#b8b8b8" stroke-width="1.2" fill="none"/></svg>
<div class="r" style="left:698px;top:795px;width:90px;height:16px;background:#1b1b1b;"></div>
<div class="t" style="left:705px;top:797.69px;font-size:11px;color:#c4c4c4;">None</div>
<svg class="r" style="left:773px;top:800px;" width="9" height="6" viewBox="0 0 9 6"><path d="M1 1L4.5 4.5L8 1" stroke="#c8c8c8" stroke-width="1.1" fill="none"/></svg>
<div class="r" style="left:807px;top:728px;width:1px;height:293px;background:#0a0a0a;"></div>
<div class="r" style="left:808px;top:728px;width:1093px;height:10px;background:#0e0e0e;"></div>
<div class="r" style="left:815px;top:729px;width:1079px;height:8px;background:#6a6a6a;"></div>
<svg class="r" style="left:808px;top:729px;" width="8" height="8" viewBox="0 0 8 8"><path d="M8 0H5A4 4 0 0 0 5 8H8Z" fill="#2d8ceb"/></svg>
<svg class="r" style="left:1894px;top:729px;" width="8" height="8" viewBox="0 0 8 8"><path d="M0 0H3A4 4 0 0 1 3 8H0Z" fill="#2d8ceb"/></svg>
<div class="r" style="left:965px;top:729px;width:1px;height:8px;background:#2d8ceb;"></div>
<div class="r" style="left:808px;top:738px;width:1093px;height:19px;background:#232323;"></div>
<div class="r" style="left:815px;top:752px;width:1px;height:5px;background:#a0a0a0;"></div>
<div class="t" style="left:806.5px;top:740.96px;font-size:9.5px;color:#a8a8a8;clip-path:inset(0 0 0 2px);">0:00s</div>
<div class="r" style="left:923px;top:752px;width:1px;height:5px;background:#a0a0a0;"></div>
<div class="t" style="left:914.3px;top:740.96px;font-size:9.5px;color:#a8a8a8;letter-spacing:-0.1px;">05s</div>
<div class="r" style="left:1031px;top:752px;width:1px;height:5px;background:#a0a0a0;"></div>
<div class="t" style="left:1022.2px;top:740.96px;font-size:9.5px;color:#a8a8a8;letter-spacing:-0.1px;">10s</div>
<div class="r" style="left:1139px;top:752px;width:1px;height:5px;background:#a0a0a0;"></div>
<div class="t" style="left:1130.1px;top:740.96px;font-size:9.5px;color:#a8a8a8;letter-spacing:-0.1px;">15s</div>
<div class="r" style="left:1247px;top:752px;width:1px;height:5px;background:#a0a0a0;"></div>
<div class="t" style="left:1238.0px;top:740.96px;font-size:9.5px;color:#a8a8a8;letter-spacing:-0.1px;">20s</div>
<div class="r" style="left:1355px;top:752px;width:1px;height:5px;background:#a0a0a0;"></div>
<div class="t" style="left:1345.9px;top:740.96px;font-size:9.5px;color:#a8a8a8;letter-spacing:-0.1px;">25s</div>
<div class="r" style="left:1463px;top:752px;width:1px;height:5px;background:#a0a0a0;"></div>
<div class="t" style="left:1453.8px;top:740.96px;font-size:9.5px;color:#a8a8a8;letter-spacing:-0.1px;">30s</div>
<div class="r" style="left:1571px;top:752px;width:1px;height:5px;background:#a0a0a0;"></div>
<div class="t" style="left:1561.6999999999998px;top:740.96px;font-size:9.5px;color:#a8a8a8;letter-spacing:-0.1px;">35s</div>
<div class="r" style="left:1679px;top:752px;width:1px;height:5px;background:#a0a0a0;"></div>
<div class="t" style="left:1669.6px;top:740.96px;font-size:9.5px;color:#a8a8a8;letter-spacing:-0.1px;">40s</div>
<div class="r" style="left:1786px;top:752px;width:1px;height:5px;background:#a0a0a0;"></div>
<div class="t" style="left:1777.5px;top:740.96px;font-size:9.5px;color:#a8a8a8;letter-spacing:-0.1px;">45s</div>
<div class="r" style="left:1894px;top:752px;width:1px;height:5px;background:#a0a0a0;"></div>
<div class="t" style="left:1885.4px;top:740.96px;font-size:9.5px;color:#a8a8a8;letter-spacing:-0.1px;">50s</div>
<div class="r" style="left:808px;top:757px;width:1093px;height:1px;background:#0e0e0e;"></div>
<div class="r" style="left:815px;top:758px;width:1079px;height:15px;background:#666666;"></div>
<svg class="r" style="left:808px;top:758px;" width="8" height="15" viewBox="0 0 8 15"><path d="M8 0H6A5 5 0 0 0 1 5V10A5 5 0 0 0 6 15H8Z" fill="#2d8ceb"/></svg>
<svg class="r" style="left:1894px;top:758px;" width="8" height="15" viewBox="0 0 8 15"><path d="M0 0H2A5 5 0 0 1 7 5V10A5 5 0 0 1 2 15H0Z" fill="#2d8ceb"/></svg>
<div class="r" style="left:808px;top:773px;width:1093px;height:4px;background:#141414;"></div>
<div class="r" style="left:808px;top:776px;width:1093px;height:1px;background:#000;"></div>
<svg class="r" style="left:1904px;top:760px;" width="13" height="15" viewBox="0 0 13 15"><path d="M1 1H12V10L6.5 14L1 10Z" fill="#b8b8b8"/></svg>
<div class="r" style="left:808px;top:778px;width:7px;height:16px;background:#3e3e3e;"></div>
<div class="r" style="left:815px;top:778px;width:1079px;height:16px;background:#7b8678;"></div>
<div class="r" style="left:1894px;top:778px;width:7px;height:16px;background:#6e766b;"></div>
<div class="r" style="left:808px;top:795px;width:7px;height:16px;background:#454545;"></div>
<svg class="r" style="left:815px;top:795px;" width="1079" height="16" viewBox="0 0 1079 16"><defs><filter id="nz" x="0" y="0" width="100%" height="100%" color-interpolation-filters="sRGB"><feTurbulence type="fractalNoise" baseFrequency="0.8" numOctaves="1" seed="3"/><feColorMatrix type="matrix" values="0 0 0 0 0  0 0 0 0 0  0 0 0 0 0  0.6 0 0 0 -0.2"/></filter></defs><rect width="1079" height="16" fill="#b04b4e"/><rect width="1079" height="16" filter="url(#nz)"/><rect width="1079" height="1" fill="#d08487"/></svg>
<div class="r" style="left:1894px;top:795px;width:7px;height:16px;background:#4a4a4a;"></div>
<svg class="r" style="left:1902px;top:778px;" width="16" height="16" viewBox="0 0 16 16"><path d="M1 9L7 3V11" stroke="#c0c0c0" stroke-width="1.2" fill="none"/><rect x="8" y="4" width="7" height="7" fill="#c0c0c0"/><circle cx="6.5" cy="11" r="3" fill="#232323" stroke="#c0c0c0" stroke-width="1.2"/></svg>
<div class="r" style="left:808px;top:811px;width:7px;height:209px;background:#2a2a2a;"></div>
<div class="r" style="left:815px;top:811px;width:1079px;height:209px;background:#333333;"></div>
<div class="r" style="left:1894px;top:811px;width:7px;height:209px;background:#2a2a2a;"></div>
<div class="r" style="left:808px;top:794px;width:1093px;height:1px;background:#1c1c1c;"></div>
<div class="r" style="left:965px;top:743px;width:1px;height:278px;background:#2d8ceb;"></div>
<svg class="r" style="left:960px;top:743px;" width="12" height="14" viewBox="0 0 12 14"><path d="M0 0H11V7.5L6 13.5H5L0 7.5Z" fill="#2d8ceb"/><path d="M4 6.8H7M5.5 6.8V13" stroke="#1a1a1a" stroke-width="1"/></svg>
<div class="r" style="left:966px;top:774px;width:1px;height:3px;background:#22c022;"></div>
<div class="r" style="left:2px;top:1020px;width:913px;height:2px;background:#050505;"></div>
<div class="r" style="left:1px;top:1022px;width:1919px;height:15px;background:#232323;"></div>
<div class="r" style="left:5px;top:1023px;width:17px;height:14px;box-sizing:border-box;border:1px solid #2c2c2c;background:transparent;"></div>
<div class="r" style="left:23px;top:1023px;width:17px;height:14px;box-sizing:border-box;border:1px solid #2c2c2c;background:transparent;"></div>
<svg class="r" style="left:7px;top:1024px;" width="13" height="13" viewBox="0 0 13 13"><rect x="1" y="1" width="6" height="5" fill="#232323" stroke="#2d8ceb" stroke-width="1"/><rect x="3" y="3" width="6" height="6" fill="#232323" stroke="#2d8ceb" stroke-width="1"/><rect x="5.5" y="5.5" width="6" height="6.5" fill="#1a1a1a" stroke="#2d8ceb" stroke-width="1.1"/><circle cx="8.5" cy="8.8" r="1" fill="#2d8ceb"/></svg>
<svg class="r" style="left:25px;top:1024px;" width="14" height="13" viewBox="0 0 14 13"><circle cx="5" cy="5" r="4" stroke="#2d8ceb" stroke-width="1.1" fill="none"/><rect x="5.5" y="5.5" width="6" height="6" stroke="#2d8ceb" stroke-width="1.1" fill="#1a1a1a"/><path d="M6 6H8.5A4 4 0 0 1 6 8.5Z" fill="#2d8ceb"/></svg>
<svg class="r" style="left:43px;top:1023px;" width="13" height="13" viewBox="0 0 13 13"><path d="M3 1H10V5L12 6.5L10 8V12H3V8L1 6.5L3 5Z" fill="#888" stroke="#cfcfcf" stroke-width="1"/></svg>
<svg class="r" style="left:812px;top:1025px;" width="13" height="7" viewBox="0 0 13 7"><path d="M1 6L4 3L5.5 4.5L8 1.5L12 6Z" fill="#b8b8b8"/></svg>
<svg class="r" style="left:832px;top:1024px;" width="14" height="14" viewBox="0 0 14 14"><circle cx="6.5" cy="6.5" r="4.3" fill="none" stroke="#a8a8a8" stroke-width="1.7"/></svg>
<div class="r" style="left:845px;top:1028px;width:37px;height:2px;background:#3a3a3a;"></div>
<svg class="r" style="left:893px;top:1023px;" width="19" height="10" viewBox="0 0 19 10"><path d="M1 9L5 5L6 6L1 9Z M4 9L11 2L18 9Z" fill="#b8b8b8"/></svg>
<div class="r" style="left:0px;top:116px;width:342px;height:487px;box-sizing:border-box;border:3px solid #ff0000;background:transparent;"></div>
<div class="r" style="left:580px;top:263px;width:869px;height:245px;box-sizing:border-box;border:3px solid #ff0000;background:transparent;"></div></body></html>
